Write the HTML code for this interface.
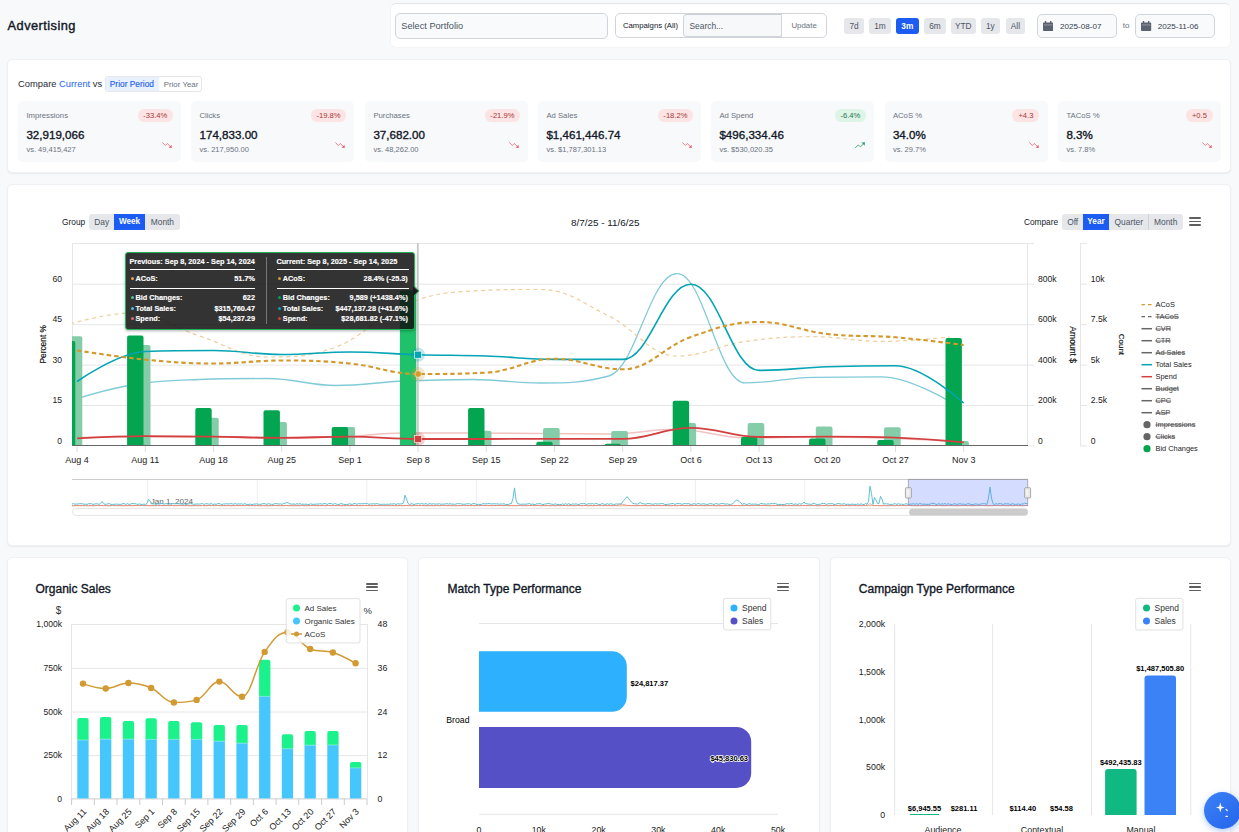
<!DOCTYPE html>
<html><head><meta charset="utf-8">
<style>
*{box-sizing:border-box;margin:0;padding:0}
html,body{width:1239px;height:832px;overflow:hidden;background:#f8f9fb;font-family:"Liberation Sans",sans-serif;color:#111827}
.a{position:absolute}
.t{line-height:1;white-space:nowrap}
</style></head><body>
<div class="a t" style="left:7.6px;top:19.56px;font-size:12.80px;color:#111827;font-weight:normal;-webkit-text-stroke:0.4px #111827;letter-spacing:0.45px">Advertising</div>
<div class="a" style="left:390.0px;top:3.2px;width:840.8px;height:44.4px;background:#fff;border:1px solid #f3f4f6;border-top:1px solid #e3e5e9;border-radius:6px"></div>
<div class="a" style="left:395.0px;top:13.0px;width:212.5px;height:26.0px;background:#f9fafb;border:1px solid #d1d5db;border-radius:5px"></div>
<div class="a t" style="left:401.3px;top:21.51px;font-size:9.20px;color:#4b5563;font-weight:normal;">Select Portfolio</div>
<div class="a" style="left:614.5px;top:13.1px;width:212.1px;height:25.4px;background:#fff;border:1px solid #d1d5db;border-radius:5px"></div>
<div class="a t" style="left:622.9px;top:22.24px;font-size:7.75px;color:#111827;font-weight:normal;">Campaigns (All)</div>
<div class="a" style="left:683.3px;top:14.3px;width:98.7px;height:22.9px;background:#f7f8fa;border:1px solid #d1d5db;border-top:1.5px solid #c9ced6;border-radius:4px 0 0 4px"></div>
<div class="a t" style="left:689.5px;top:22.19px;font-size:8.40px;color:#4b5563;font-weight:normal;">Search...</div>
<div class="a t" style="left:791.4px;top:22.31px;font-size:7.90px;color:#6b7280;font-weight:normal;">Update</div>
<div class="a" style="left:844.2px;top:18.1px;width:19.5px;height:15.6px;background:#e5e7eb;border-radius:3px"></div>
<div class="a t" style="left:854.0px;width:0;top:22.17px;font-size:8.30px;color:#4b5563;font-weight:normal;"><span style="position:absolute;left:0;transform:translateX(-50%)">7d</span></div>
<div class="a" style="left:869.2px;top:18.1px;width:21.5px;height:15.6px;background:#e5e7eb;border-radius:3px"></div>
<div class="a t" style="left:880.0px;width:0;top:22.17px;font-size:8.30px;color:#4b5563;font-weight:normal;"><span style="position:absolute;left:0;transform:translateX(-50%)">1m</span></div>
<div class="a" style="left:896.0px;top:18.1px;width:22.6px;height:15.6px;background:#1d5cf2;border-radius:3px"></div>
<div class="a t" style="left:907.3px;width:0;top:22.17px;font-size:8.30px;color:#fff;font-weight:bold;"><span style="position:absolute;left:0;transform:translateX(-50%)">3m</span></div>
<div class="a" style="left:924.1px;top:18.1px;width:21.6px;height:15.6px;background:#e5e7eb;border-radius:3px"></div>
<div class="a t" style="left:934.9px;width:0;top:22.17px;font-size:8.30px;color:#4b5563;font-weight:normal;"><span style="position:absolute;left:0;transform:translateX(-50%)">6m</span></div>
<div class="a" style="left:950.9px;top:18.1px;width:24.9px;height:15.6px;background:#e5e7eb;border-radius:3px"></div>
<div class="a t" style="left:963.3px;width:0;top:22.17px;font-size:8.30px;color:#4b5563;font-weight:normal;"><span style="position:absolute;left:0;transform:translateX(-50%)">YTD</span></div>
<div class="a" style="left:981.1px;top:18.1px;width:18.5px;height:15.6px;background:#e5e7eb;border-radius:3px"></div>
<div class="a t" style="left:990.4px;width:0;top:22.17px;font-size:8.30px;color:#4b5563;font-weight:normal;"><span style="position:absolute;left:0;transform:translateX(-50%)">1y</span></div>
<div class="a" style="left:1006.1px;top:18.1px;width:18.6px;height:15.6px;background:#e5e7eb;border-radius:3px"></div>
<div class="a t" style="left:1015.4px;width:0;top:22.17px;font-size:8.30px;color:#4b5563;font-weight:normal;"><span style="position:absolute;left:0;transform:translateX(-50%)">All</span></div>
<div class="a" style="left:1037.1px;top:14.3px;width:79.8px;height:23.5px;background:#f9fafb;border:1px solid #d1d5db;border-radius:5px"></div>
<svg class="a" style="left:1043.1px;top:21px" width="10.2" height="10" viewBox="0 0 10.2 10"><rect x="0" y="1.6" width="10.2" height="8.4" rx="0.8" fill="#5b6270"/><rect x="1.8" y="0" width="1.4" height="2.6" fill="#5b6270"/><rect x="7" y="0" width="1.4" height="2.6" fill="#5b6270"/><rect x="0.8" y="3.6" width="8.6" height="0.7" fill="#fff" opacity="0.5"/></svg>
<div class="a t" style="left:1060.0px;top:22.74px;font-size:8.10px;color:#374151;font-weight:normal;">2025-08-07</div>
<div class="a" style="left:1135.4px;top:14.3px;width:79.3px;height:23.5px;background:#f9fafb;border:1px solid #d1d5db;border-radius:5px"></div>
<svg class="a" style="left:1141.4px;top:21px" width="10.2" height="10" viewBox="0 0 10.2 10"><rect x="0" y="1.6" width="10.2" height="8.4" rx="0.8" fill="#5b6270"/><rect x="1.8" y="0" width="1.4" height="2.6" fill="#5b6270"/><rect x="7" y="0" width="1.4" height="2.6" fill="#5b6270"/><rect x="0.8" y="3.6" width="8.6" height="0.7" fill="#fff" opacity="0.5"/></svg>
<div class="a t" style="left:1157.7px;top:22.74px;font-size:8.10px;color:#374151;font-weight:normal;">2025-11-06</div>
<div class="a t" style="left:1122.8px;top:22.33px;font-size:8.00px;color:#6b7280;font-weight:normal;">to</div>
<div class="a" style="left:6.7px;top:58.7px;width:1224.6px;height:114.3px;background:#fff;border:1px solid #eef0f3;border-radius:5px;box-shadow:0 1px 1.5px rgba(16,24,40,0.07)"></div>
<div class="a t" style="left:18.1px;top:79.70px;font-size:9.33px;color:#1f2937;font-weight:normal;">Compare <span style="color:#2563eb">Current</span> vs</div>
<div class="a" style="left:105.2px;top:76.2px;width:97.2px;height:15.4px;background:#fff;border:1px solid #e5e7eb;border-radius:3px"></div>
<div class="a" style="left:105.7px;top:76.7px;width:53.6px;height:14.4px;background:#e8f1fd;border-radius:3px 0 0 3px"></div>
<div class="a t" style="left:109.8px;top:80.31px;font-size:8.37px;color:#2563eb;font-weight:normal;-webkit-text-stroke:0.15px #2563eb">Prior Period</div>
<div class="a t" style="left:163.7px;top:80.71px;font-size:7.90px;color:#6b7280;font-weight:normal;">Prior Year</div>
<div class="a" style="left:18.0px;top:101.0px;width:163.0px;height:61.0px;background:#f8f9fb;border-radius:5px"></div>
<div class="a t" style="left:26.4px;top:111.67px;font-size:7.72px;color:#6b7280;font-weight:normal;">Impressions</div>
<div class="a" style="left:137.7px;top:109.0px;width:35.3px;height:12.6px;background:#fde4e4;border-radius:6.3px"></div>
<div class="a t" style="left:155.3px;width:0;top:111.67px;font-size:7.60px;color:#a83636;font-weight:normal;"><span style="position:absolute;left:0;transform:translateX(-50%)">-33.4%</span></div>
<div class="a t" style="left:26.4px;top:129.08px;font-size:11.60px;color:#111827;font-weight:normal;-webkit-text-stroke:0.35px #111827">32,919,066</div>
<div class="a t" style="left:26.4px;top:145.73px;font-size:7.53px;color:#6b7280;font-weight:normal;">vs. 49,415,427</div>
<svg class="a" style="left:162.0px;top:142px" width="10" height="6.5" viewBox="0 0 10 6.5"><path d="M0.3 0.4 L3.3 3.5 L5.3 1.5 L8.4 4.5" fill="none" stroke="#e8636b" stroke-width="0.8"/><path d="M9.8 6.1 L6.6 5.8 L9.5 2.8 Z" fill="#e8636b"/></svg>
<div class="a" style="left:191.1px;top:101.0px;width:163.0px;height:61.0px;background:#f8f9fb;border-radius:5px"></div>
<div class="a t" style="left:199.5px;top:111.67px;font-size:7.72px;color:#6b7280;font-weight:normal;">Clicks</div>
<div class="a" style="left:310.8px;top:109.0px;width:35.3px;height:12.6px;background:#fde4e4;border-radius:6.3px"></div>
<div class="a t" style="left:328.5px;width:0;top:111.67px;font-size:7.60px;color:#a83636;font-weight:normal;"><span style="position:absolute;left:0;transform:translateX(-50%)">-19.8%</span></div>
<div class="a t" style="left:199.5px;top:129.08px;font-size:11.60px;color:#111827;font-weight:normal;-webkit-text-stroke:0.35px #111827">174,833.00</div>
<div class="a t" style="left:199.5px;top:145.73px;font-size:7.53px;color:#6b7280;font-weight:normal;">vs. 217,950.00</div>
<svg class="a" style="left:335.1px;top:142px" width="10" height="6.5" viewBox="0 0 10 6.5"><path d="M0.3 0.4 L3.3 3.5 L5.3 1.5 L8.4 4.5" fill="none" stroke="#e8636b" stroke-width="0.8"/><path d="M9.8 6.1 L6.6 5.8 L9.5 2.8 Z" fill="#e8636b"/></svg>
<div class="a" style="left:365.0px;top:101.0px;width:163.0px;height:61.0px;background:#f8f9fb;border-radius:5px"></div>
<div class="a t" style="left:373.4px;top:111.67px;font-size:7.72px;color:#6b7280;font-weight:normal;">Purchases</div>
<div class="a" style="left:484.7px;top:109.0px;width:35.3px;height:12.6px;background:#fde4e4;border-radius:6.3px"></div>
<div class="a t" style="left:502.4px;width:0;top:111.67px;font-size:7.60px;color:#a83636;font-weight:normal;"><span style="position:absolute;left:0;transform:translateX(-50%)">-21.9%</span></div>
<div class="a t" style="left:373.4px;top:129.08px;font-size:11.60px;color:#111827;font-weight:normal;-webkit-text-stroke:0.35px #111827">37,682.00</div>
<div class="a t" style="left:373.4px;top:145.73px;font-size:7.53px;color:#6b7280;font-weight:normal;">vs. 48,262.00</div>
<svg class="a" style="left:509.0px;top:142px" width="10" height="6.5" viewBox="0 0 10 6.5"><path d="M0.3 0.4 L3.3 3.5 L5.3 1.5 L8.4 4.5" fill="none" stroke="#e8636b" stroke-width="0.8"/><path d="M9.8 6.1 L6.6 5.8 L9.5 2.8 Z" fill="#e8636b"/></svg>
<div class="a" style="left:538.0px;top:101.0px;width:163.0px;height:61.0px;background:#f8f9fb;border-radius:5px"></div>
<div class="a t" style="left:546.4px;top:111.67px;font-size:7.72px;color:#6b7280;font-weight:normal;">Ad Sales</div>
<div class="a" style="left:657.7px;top:109.0px;width:35.3px;height:12.6px;background:#fde4e4;border-radius:6.3px"></div>
<div class="a t" style="left:675.4px;width:0;top:111.67px;font-size:7.60px;color:#a83636;font-weight:normal;"><span style="position:absolute;left:0;transform:translateX(-50%)">-18.2%</span></div>
<div class="a t" style="left:546.4px;top:129.08px;font-size:11.60px;color:#111827;font-weight:normal;-webkit-text-stroke:0.35px #111827">$1,461,446.74</div>
<div class="a t" style="left:546.4px;top:145.73px;font-size:7.53px;color:#6b7280;font-weight:normal;">vs. $1,787,301.13</div>
<svg class="a" style="left:682.0px;top:142px" width="10" height="6.5" viewBox="0 0 10 6.5"><path d="M0.3 0.4 L3.3 3.5 L5.3 1.5 L8.4 4.5" fill="none" stroke="#e8636b" stroke-width="0.8"/><path d="M9.8 6.1 L6.6 5.8 L9.5 2.8 Z" fill="#e8636b"/></svg>
<div class="a" style="left:711.0px;top:101.0px;width:163.0px;height:61.0px;background:#f8f9fb;border-radius:5px"></div>
<div class="a t" style="left:719.4px;top:111.67px;font-size:7.72px;color:#6b7280;font-weight:normal;">Ad Spend</div>
<div class="a" style="left:834.8px;top:109.0px;width:31.2px;height:12.6px;background:#dcf5e6;border-radius:6.3px"></div>
<div class="a t" style="left:850.4px;width:0;top:111.67px;font-size:7.60px;color:#2a7350;font-weight:normal;"><span style="position:absolute;left:0;transform:translateX(-50%)">-6.4%</span></div>
<div class="a t" style="left:719.4px;top:129.08px;font-size:11.60px;color:#111827;font-weight:normal;-webkit-text-stroke:0.35px #111827">$496,334.46</div>
<div class="a t" style="left:719.4px;top:145.73px;font-size:7.53px;color:#6b7280;font-weight:normal;">vs. $530,020.35</div>
<svg class="a" style="left:855.0px;top:142px" width="10" height="6.5" viewBox="0 0 10 6.5"><path d="M0.3 5.9 L3.3 2.9 L5.3 4.9 L8.4 1.9" fill="none" stroke="#34a070" stroke-width="0.9"/><path d="M10 0.2 L6.4 0.5 L9.7 3.8 Z" fill="#34a070"/></svg>
<div class="a" style="left:884.5px;top:101.0px;width:163.0px;height:61.0px;background:#f8f9fb;border-radius:5px"></div>
<div class="a t" style="left:892.9px;top:111.67px;font-size:7.72px;color:#6b7280;font-weight:normal;">ACoS %</div>
<div class="a" style="left:1012.3px;top:109.0px;width:27.2px;height:12.6px;background:#fde4e4;border-radius:6.3px"></div>
<div class="a t" style="left:1025.9px;width:0;top:111.67px;font-size:7.60px;color:#a83636;font-weight:normal;"><span style="position:absolute;left:0;transform:translateX(-50%)">+4.3</span></div>
<div class="a t" style="left:892.9px;top:129.08px;font-size:11.60px;color:#111827;font-weight:normal;-webkit-text-stroke:0.35px #111827">34.0%</div>
<div class="a t" style="left:892.9px;top:145.73px;font-size:7.53px;color:#6b7280;font-weight:normal;">vs. 29.7%</div>
<svg class="a" style="left:1028.5px;top:142px" width="10" height="6.5" viewBox="0 0 10 6.5"><path d="M0.3 0.4 L3.3 3.5 L5.3 1.5 L8.4 4.5" fill="none" stroke="#e8636b" stroke-width="0.8"/><path d="M9.8 6.1 L6.6 5.8 L9.5 2.8 Z" fill="#e8636b"/></svg>
<div class="a" style="left:1058.0px;top:101.0px;width:163.0px;height:61.0px;background:#f8f9fb;border-radius:5px"></div>
<div class="a t" style="left:1066.4px;top:111.67px;font-size:7.72px;color:#6b7280;font-weight:normal;">TACoS %</div>
<div class="a" style="left:1185.8px;top:109.0px;width:27.2px;height:12.6px;background:#fde4e4;border-radius:6.3px"></div>
<div class="a t" style="left:1199.4px;width:0;top:111.67px;font-size:7.60px;color:#a83636;font-weight:normal;"><span style="position:absolute;left:0;transform:translateX(-50%)">+0.5</span></div>
<div class="a t" style="left:1066.4px;top:129.08px;font-size:11.60px;color:#111827;font-weight:normal;-webkit-text-stroke:0.35px #111827">8.3%</div>
<div class="a t" style="left:1066.4px;top:145.73px;font-size:7.53px;color:#6b7280;font-weight:normal;">vs. 7.8%</div>
<svg class="a" style="left:1202.0px;top:142px" width="10" height="6.5" viewBox="0 0 10 6.5"><path d="M0.3 0.4 L3.3 3.5 L5.3 1.5 L8.4 4.5" fill="none" stroke="#e8636b" stroke-width="0.8"/><path d="M9.8 6.1 L6.6 5.8 L9.5 2.8 Z" fill="#e8636b"/></svg>
<div class="a" style="left:6.7px;top:183.6px;width:1224.6px;height:362.7px;background:#fff;border:1px solid #eef0f3;border-radius:5px;box-shadow:0 1px 1.5px rgba(16,24,40,0.07)"></div>
<div class="a t" style="left:62.1px;top:217.57px;font-size:8.30px;color:#111827;font-weight:normal;">Group</div>
<div class="a" style="left:89.2px;top:214.2px;width:90.8px;height:15.5px;background:#e5e7eb;border-radius:3px"></div>
<div class="a" style="left:114.1px;top:214.2px;width:30.8px;height:15.5px;background:#1d5cf2"></div>
<div class="a t" style="left:101.7px;width:0;top:217.59px;font-size:8.40px;color:#4b5563;font-weight:normal;"><span style="position:absolute;left:0;transform:translateX(-50%)">Day</span></div>
<div class="a t" style="left:129.5px;width:0;top:217.76px;font-size:8.20px;color:#fff;font-weight:bold;"><span style="position:absolute;left:0;transform:translateX(-50%)">Week</span></div>
<div class="a t" style="left:162.4px;width:0;top:217.59px;font-size:8.40px;color:#4b5563;font-weight:normal;"><span style="position:absolute;left:0;transform:translateX(-50%)">Month</span></div>
<div class="a t" style="left:605.3px;width:0;top:217.52px;font-size:9.90px;color:#111827;font-weight:normal;"><span style="position:absolute;left:0;transform:translateX(-50%)">8/7/25 - 11/6/25</span></div>
<div class="a t" style="left:1023.9px;top:217.57px;font-size:8.30px;color:#111827;font-weight:normal;">Compare</div>
<div class="a" style="left:1062.3px;top:213.9px;width:120.5px;height:15.7px;background:#e5e7eb;border-radius:3px"></div>
<div class="a" style="left:1083.0px;top:213.9px;width:25.9px;height:15.7px;background:#1d5cf2"></div>
<div class="a" style="left:1148.3px;top:213.9px;width:0.6px;height:15.7px;background:#cfd2d8"></div>
<div class="a t" style="left:1072.7px;width:0;top:217.59px;font-size:8.40px;color:#4b5563;font-weight:normal;"><span style="position:absolute;left:0;transform:translateX(-50%)">Off</span></div>
<div class="a t" style="left:1096.0px;width:0;top:217.76px;font-size:8.20px;color:#fff;font-weight:bold;"><span style="position:absolute;left:0;transform:translateX(-50%)">Year</span></div>
<div class="a t" style="left:1128.8px;width:0;top:217.59px;font-size:8.40px;color:#4b5563;font-weight:normal;"><span style="position:absolute;left:0;transform:translateX(-50%)">Quarter</span></div>
<div class="a t" style="left:1165.7px;width:0;top:217.59px;font-size:8.40px;color:#4b5563;font-weight:normal;"><span style="position:absolute;left:0;transform:translateX(-50%)">Month</span></div>
<div class="a" style="left:1189.3px;top:217.2px;width:11.5px;height:1.7px;background:#5f5f5f;border-radius:1px"></div>
<div class="a" style="left:1189.3px;top:220.6px;width:11.5px;height:1.7px;background:#5f5f5f;border-radius:1px"></div>
<div class="a" style="left:1189.3px;top:224.0px;width:11.5px;height:1.7px;background:#5f5f5f;border-radius:1px"></div>
<div class="a" style="left:6.7px;top:557.0px;width:401.8px;height:313.0px;background:#fff;border:1px solid #eef0f3;border-radius:5px;box-shadow:0 1px 1.5px rgba(16,24,40,0.07)"></div>
<div class="a" style="left:418.4px;top:557.0px;width:402.1px;height:313.0px;background:#fff;border:1px solid #eef0f3;border-radius:5px;box-shadow:0 1px 1.5px rgba(16,24,40,0.07)"></div>
<div class="a" style="left:830.0px;top:557.0px;width:401.3px;height:313.0px;background:#fff;border:1px solid #eef0f3;border-radius:5px;box-shadow:0 1px 1.5px rgba(16,24,40,0.07)"></div>
<div class="a t" style="left:35.5px;top:583.04px;font-size:12.00px;color:#111827;font-weight:normal;-webkit-text-stroke:0.35px currentColor;">Organic Sales</div>
<div class="a t" style="left:447.5px;top:583.04px;font-size:12.00px;color:#111827;font-weight:normal;-webkit-text-stroke:0.35px currentColor;">Match Type Performance</div>
<div class="a t" style="left:858.8px;top:583.14px;font-size:12.00px;color:#111827;font-weight:normal;-webkit-text-stroke:0.35px currentColor;">Campaign Type Performance</div>
<div class="a" style="left:366.0px;top:583.0px;width:11.5px;height:1.7px;background:#5f5f5f;border-radius:1px"></div>
<div class="a" style="left:366.0px;top:586.4px;width:11.5px;height:1.7px;background:#5f5f5f;border-radius:1px"></div>
<div class="a" style="left:366.0px;top:589.8px;width:11.5px;height:1.7px;background:#5f5f5f;border-radius:1px"></div>
<div class="a" style="left:777.0px;top:582.8px;width:11.5px;height:1.7px;background:#5f5f5f;border-radius:1px"></div>
<div class="a" style="left:777.0px;top:586.2px;width:11.5px;height:1.7px;background:#5f5f5f;border-radius:1px"></div>
<div class="a" style="left:777.0px;top:589.6px;width:11.5px;height:1.7px;background:#5f5f5f;border-radius:1px"></div>
<div class="a" style="left:1189.2px;top:582.8px;width:11.5px;height:1.7px;background:#5f5f5f;border-radius:1px"></div>
<div class="a" style="left:1189.2px;top:586.2px;width:11.5px;height:1.7px;background:#5f5f5f;border-radius:1px"></div>
<div class="a" style="left:1189.2px;top:589.6px;width:11.5px;height:1.7px;background:#5f5f5f;border-radius:1px"></div>
<svg class="a" style="left:0;top:0" width="1239" height="832" viewBox="0 0 1239 832" font-family="Liberation Sans, sans-serif">
<line x1="72" y1="243.5" x2="1028" y2="243.5" stroke="#e6e6e6" stroke-width="1"/>
<line x1="72" y1="284.2" x2="1028" y2="284.2" stroke="#e6e6e6" stroke-width="1"/>
<line x1="72" y1="324.7" x2="1028" y2="324.7" stroke="#e6e6e6" stroke-width="1"/>
<line x1="72" y1="365.1" x2="1028" y2="365.1" stroke="#e6e6e6" stroke-width="1"/>
<line x1="72" y1="405.5" x2="1028" y2="405.5" stroke="#e6e6e6" stroke-width="1"/>
<line x1="1028" y1="243.5" x2="1034" y2="243.5" stroke="#e6e6e6"/>
<line x1="1028" y1="284.2" x2="1034" y2="284.2" stroke="#e6e6e6"/>
<line x1="1028" y1="324.7" x2="1034" y2="324.7" stroke="#e6e6e6"/>
<line x1="1028" y1="365.1" x2="1034" y2="365.1" stroke="#e6e6e6"/>
<line x1="1028" y1="405.5" x2="1034" y2="405.5" stroke="#e6e6e6"/>
<line x1="1028" y1="445.9" x2="1034" y2="445.9" stroke="#e6e6e6"/>
<line x1="1080.5" y1="243" x2="1080.5" y2="446" stroke="#e6e6e6"/>
<line x1="1027.5" y1="243" x2="1027.5" y2="446" stroke="#e6e6e6"/>
<line x1="1080" y1="243.5" x2="1087" y2="243.5" stroke="#e6e6e6"/>
<line x1="1080" y1="284.2" x2="1087" y2="284.2" stroke="#e6e6e6"/>
<line x1="1080" y1="324.7" x2="1087" y2="324.7" stroke="#e6e6e6"/>
<line x1="1080" y1="365.1" x2="1087" y2="365.1" stroke="#e6e6e6"/>
<line x1="1080" y1="405.5" x2="1087" y2="405.5" stroke="#e6e6e6"/>
<line x1="1080" y1="445.9" x2="1087" y2="445.9" stroke="#e6e6e6"/>
<line x1="72.5" y1="243" x2="72.5" y2="445" stroke="#e6e6e6"/>
<defs><clipPath id="pc"><rect x="72" y="243" width="956" height="203"/></clipPath></defs>
<g clip-path="url(#pc)">
<path d="M63.2 437.5 C63.2 437.5 104.1 437.0 131.4 437.0 C158.7 437.0 172.3 437.0 199.6 437.0 C226.9 437.0 240.5 437.5 267.8 437.5 C295.1 437.5 308.7 437.5 336.0 437.0 C363.3 436.5 376.9 433.0 404.2 433.0 C431.5 433.0 445.1 433.0 472.4 433.0 C499.7 433.0 513.3 433.3 540.6 433.5 C567.9 433.7 581.5 434.0 608.8 434.0 C636.1 434.0 649.7 429.3 677.0 429.3 C704.3 429.3 717.9 437.8 745.2 437.8 C772.5 437.8 786.1 437.0 813.4 437.0 C840.7 437.0 854.3 437.2 881.6 438.0 C908.9 438.8 949.8 441.0 949.8 441.0" fill="none" stroke="#f2c1c1" stroke-width="1.5"/>
<path d="M63.2 403.0 C63.2 403.0 104.1 389.7 131.4 385.0 C158.7 380.3 172.3 380.5 199.6 379.5 C226.9 378.5 240.5 378.5 267.8 378.5 C295.1 378.5 308.7 385.5 336.0 385.5 C363.3 385.5 376.9 382.2 404.2 381.0 C431.5 379.8 445.1 379.5 472.4 379.5 C499.7 379.5 513.3 383.0 540.6 383.0 C567.9 383.0 581.5 383.0 608.8 376.0 C636.1 369.0 649.7 273.7 677.0 273.7 C704.3 273.7 717.9 382.9 745.2 382.9 C772.5 382.9 786.1 377.8 813.4 377.3 C840.7 376.8 854.3 376.8 881.6 376.8 C908.9 376.8 949.8 401.6 949.8 401.6" fill="none" stroke="#80cbd8" stroke-width="1.3"/>
<path d="M63.2 326.0 C63.2 326.0 104.1 313.0 131.4 313.0 C158.7 313.0 172.3 327.2 199.6 336.0 C226.9 344.8 240.5 357.0 267.8 357.0 C295.1 357.0 308.7 357.0 336.0 347.0 C363.3 337.0 376.9 316.2 404.2 305.0 C431.5 293.8 445.1 292.5 472.4 291.0 C499.7 289.5 513.3 289.5 540.6 289.5 C567.9 289.5 581.5 302.7 608.8 316.0 C636.1 329.3 649.7 356.0 677.0 356.0 C704.3 356.0 717.9 345.4 745.2 341.5 C772.5 337.6 786.1 336.7 813.4 336.7 C840.7 336.7 854.3 341.4 881.6 341.4 C908.9 341.4 949.8 337.0 949.8 337.0" fill="none" stroke="#efcd9c" stroke-width="1.2" stroke-dasharray="4 3.5"/>
<path d="M65.6 445.4 V338.2 a2 2 0 0 1 2 -2 H80.3 a2 2 0 0 1 2 2 V445.4 Z" fill="#85cda9"/>
<path d="M58.9 445.4 V342.9 a2 2 0 0 1 2 -2 H73.3 a2 2 0 0 1 2 2 V445.4 Z" fill="#03a550"/>
<path d="M133.8 445.4 V347.0 a2 2 0 0 1 2 -2 H148.5 a2 2 0 0 1 2 2 V445.4 Z" fill="#85cda9"/>
<path d="M127.1 445.4 V337.6 a2 2 0 0 1 2 -2 H141.5 a2 2 0 0 1 2 2 V445.4 Z" fill="#03a550"/>
<path d="M202.0 445.4 V419.7 a2 2 0 0 1 2 -2 H216.7 a2 2 0 0 1 2 2 V445.4 Z" fill="#85cda9"/>
<path d="M195.3 445.4 V410.0 a2 2 0 0 1 2 -2 H209.7 a2 2 0 0 1 2 2 V445.4 Z" fill="#03a550"/>
<path d="M270.2 445.4 V424.0 a2 2 0 0 1 2 -2 H284.9 a2 2 0 0 1 2 2 V445.4 Z" fill="#85cda9"/>
<path d="M263.5 445.4 V412.2 a2 2 0 0 1 2 -2 H277.9 a2 2 0 0 1 2 2 V445.4 Z" fill="#03a550"/>
<path d="M338.4 445.4 V429.0 a2 2 0 0 1 2 -2 H353.1 a2 2 0 0 1 2 2 V445.4 Z" fill="#85cda9"/>
<path d="M331.7 445.4 V429.0 a2 2 0 0 1 2 -2 H346.1 a2 2 0 0 1 2 2 V445.4 Z" fill="#03a550"/>
<path d="M399.9 445.4 V292.3 a2 2 0 0 1 2 -2 H414.3 a2 2 0 0 1 2 2 V445.4 Z" fill="#1fc16b"/>
<path d="M474.8 445.4 V432.7 a2 2 0 0 1 2 -2 H489.5 a2 2 0 0 1 2 2 V445.4 Z" fill="#85cda9"/>
<path d="M468.1 445.4 V410.0 a2 2 0 0 1 2 -2 H482.5 a2 2 0 0 1 2 2 V445.4 Z" fill="#03a550"/>
<path d="M543.0 445.4 V429.9 a2 2 0 0 1 2 -2 H557.7 a2 2 0 0 1 2 2 V445.4 Z" fill="#85cda9"/>
<path d="M536.3 445.4 V443.7 a2 2 0 0 1 2 -2 H550.7 a2 2 0 0 1 2 2 V445.4 Z" fill="#03a550"/>
<path d="M611.2 445.4 V433.1 a2 2 0 0 1 2 -2 H625.9 a2 2 0 0 1 2 2 V445.4 Z" fill="#85cda9"/>
<path d="M604.5 445.4 V445.7 a2 2 0 0 1 2 -2 H618.9 a2 2 0 0 1 2 2 V445.4 Z" fill="#03a550"/>
<path d="M679.4 445.4 V425.0 a2 2 0 0 1 2 -2 H694.1 a2 2 0 0 1 2 2 V445.4 Z" fill="#85cda9"/>
<path d="M672.7 445.4 V402.8 a2 2 0 0 1 2 -2 H687.1 a2 2 0 0 1 2 2 V445.4 Z" fill="#03a550"/>
<path d="M747.6 445.4 V425.0 a2 2 0 0 1 2 -2 H762.3 a2 2 0 0 1 2 2 V445.4 Z" fill="#85cda9"/>
<path d="M740.9 445.4 V439.0 a2 2 0 0 1 2 -2 H755.3 a2 2 0 0 1 2 2 V445.4 Z" fill="#03a550"/>
<path d="M815.8 445.4 V428.5 a2 2 0 0 1 2 -2 H830.5 a2 2 0 0 1 2 2 V445.4 Z" fill="#85cda9"/>
<path d="M809.1 445.4 V440.4 a2 2 0 0 1 2 -2 H823.5 a2 2 0 0 1 2 2 V445.4 Z" fill="#03a550"/>
<path d="M884.0 445.4 V429.3 a2 2 0 0 1 2 -2 H898.7 a2 2 0 0 1 2 2 V445.4 Z" fill="#85cda9"/>
<path d="M877.3 445.4 V442.0 a2 2 0 0 1 2 -2 H891.7 a2 2 0 0 1 2 2 V445.4 Z" fill="#03a550"/>
<path d="M952.2 445.4 V443.0 a2 2 0 0 1 2 -2 H966.9 a2 2 0 0 1 2 2 V445.4 Z" fill="#85cda9"/>
<path d="M945.5 445.4 V340.0 a2 2 0 0 1 2 -2 H959.9 a2 2 0 0 1 2 2 V445.4 Z" fill="#03a550"/>
<path d="M77.1 438.4 C77.1 438.4 118.0 436.2 145.3 436.2 C172.6 436.2 186.2 436.4 213.5 436.7 C240.8 437.0 254.4 437.8 281.7 437.8 C309.0 437.8 322.6 436.7 349.9 436.7 C377.2 436.7 390.8 439.0 418.1 439.0 C445.4 439.0 459.0 439.0 486.3 439.0 C513.6 439.0 527.2 438.8 554.5 438.8 C581.8 438.8 595.4 438.9 622.7 438.9 C650.0 438.9 663.6 427.9 690.9 427.9 C718.2 427.9 731.8 437.0 759.1 437.0 C786.4 437.0 800.0 436.7 827.3 436.7 C854.6 436.7 868.2 436.7 895.5 437.6 C922.8 438.5 963.7 442.3 963.7 442.3" fill="none" stroke="#d33f3f" stroke-width="1.8"/>
<path d="M77.1 381.5 C77.1 381.5 118.0 352.5 145.3 351.5 C172.6 350.5 186.2 350.5 213.5 350.5 C240.8 350.5 254.4 354.5 281.7 354.5 C309.0 354.5 322.6 352.0 349.9 352.0 C377.2 352.0 390.8 353.9 418.1 354.7 C445.4 355.5 459.0 355.1 486.3 356.0 C513.6 356.9 527.2 359.4 554.5 359.4 C581.8 359.4 595.4 359.4 622.7 359.4 C650.0 359.4 663.6 284.2 690.9 284.2 C718.2 284.2 731.8 370.4 759.1 370.4 C786.4 370.4 800.0 367.7 827.3 366.8 C854.6 365.9 868.2 365.7 895.5 365.7 C922.8 365.7 963.7 403.0 963.7 403.0" fill="none" stroke="#03a4b4" stroke-width="1.6"/>
<path d="M77.1 350.5 C77.1 350.5 118.0 357.0 145.3 359.6 C172.6 362.2 186.2 363.5 213.5 363.5 C240.8 363.5 254.4 360.5 281.7 360.5 C309.0 360.5 322.6 360.8 349.9 363.5 C377.2 366.2 390.8 374.0 418.1 374.0 C445.4 374.0 459.0 374.0 486.3 372.6 C513.6 371.2 527.2 358.8 554.5 358.8 C581.8 358.8 595.4 369.3 622.7 369.3 C650.0 369.3 663.6 346.5 690.9 337.0 C718.2 327.5 731.8 322.0 759.1 322.0 C786.4 322.0 800.0 330.9 827.3 334.0 C854.6 337.1 868.2 335.1 895.5 337.3 C922.8 339.5 963.7 345.0 963.7 345.0" fill="none" stroke="#d4992c" stroke-width="2.1" stroke-dasharray="4.5 3"/>
</g>
<line x1="417.8" y1="243" x2="417.8" y2="445" stroke="#c8c8c8" stroke-width="1.8"/>
<line x1="72" y1="445.5" x2="1028" y2="445.5" stroke="#666" stroke-width="1.2"/>
<line x1="77.1" y1="446" x2="77.1" y2="452" stroke="#ddd"/>
<line x1="145.3" y1="446" x2="145.3" y2="452" stroke="#ddd"/>
<line x1="213.5" y1="446" x2="213.5" y2="452" stroke="#ddd"/>
<line x1="281.7" y1="446" x2="281.7" y2="452" stroke="#ddd"/>
<line x1="349.9" y1="446" x2="349.9" y2="452" stroke="#ddd"/>
<line x1="418.1" y1="446" x2="418.1" y2="452" stroke="#ddd"/>
<line x1="486.3" y1="446" x2="486.3" y2="452" stroke="#ddd"/>
<line x1="554.5" y1="446" x2="554.5" y2="452" stroke="#ddd"/>
<line x1="622.7" y1="446" x2="622.7" y2="452" stroke="#ddd"/>
<line x1="690.9" y1="446" x2="690.9" y2="452" stroke="#ddd"/>
<line x1="759.1" y1="446" x2="759.1" y2="452" stroke="#ddd"/>
<line x1="827.3" y1="446" x2="827.3" y2="452" stroke="#ddd"/>
<line x1="895.5" y1="446" x2="895.5" y2="452" stroke="#ddd"/>
<line x1="963.7" y1="446" x2="963.7" y2="452" stroke="#ddd"/>
<circle cx="418.1" cy="354.7" r="7" fill="#03a4b4" fill-opacity="0.25"/>
<rect x="414.6" y="351.2" width="7" height="7" fill="#03a4b4" stroke="#fff" stroke-width="0.6"/>
<circle cx="418.1" cy="374" r="7" fill="#d59b2d" fill-opacity="0.25"/>
<circle cx="418.1" cy="374" r="3.3" fill="#d59b2d" stroke="#fff" stroke-width="0.5"/>
<circle cx="418.1" cy="439" r="7" fill="#d33f3f" fill-opacity="0.25"/>
<rect x="414.6" y="435.5" width="7" height="7" fill="#d33f3f" stroke="#fff" stroke-width="0.6"/>
<text x="77.1" y="462.9" text-anchor="middle" font-size="9" fill="#222">Aug 4</text>
<text x="145.3" y="462.9" text-anchor="middle" font-size="9" fill="#222">Aug 11</text>
<text x="213.5" y="462.9" text-anchor="middle" font-size="9" fill="#222">Aug 18</text>
<text x="281.7" y="462.9" text-anchor="middle" font-size="9" fill="#222">Aug 25</text>
<text x="349.9" y="462.9" text-anchor="middle" font-size="9" fill="#222">Sep 1</text>
<text x="418.1" y="462.9" text-anchor="middle" font-size="9" fill="#222">Sep 8</text>
<text x="486.3" y="462.9" text-anchor="middle" font-size="9" fill="#222">Sep 15</text>
<text x="554.5" y="462.9" text-anchor="middle" font-size="9" fill="#222">Sep 22</text>
<text x="622.7" y="462.9" text-anchor="middle" font-size="9" fill="#222">Sep 29</text>
<text x="690.9" y="462.9" text-anchor="middle" font-size="9" fill="#222">Oct 6</text>
<text x="759.1" y="462.9" text-anchor="middle" font-size="9" fill="#222">Oct 13</text>
<text x="827.3" y="462.9" text-anchor="middle" font-size="9" fill="#222">Oct 20</text>
<text x="895.5" y="462.9" text-anchor="middle" font-size="9" fill="#222">Oct 27</text>
<text x="963.7" y="462.9" text-anchor="middle" font-size="9" fill="#222">Nov 3</text>
<text x="62.1" y="281.9" text-anchor="end" font-size="8.6" fill="#222">60</text>
<text x="62.1" y="322.4" text-anchor="end" font-size="8.6" fill="#222">45</text>
<text x="62.1" y="362.8" text-anchor="end" font-size="8.6" fill="#222">30</text>
<text x="62.1" y="403.2" text-anchor="end" font-size="8.6" fill="#222">15</text>
<text x="62.1" y="443.6" text-anchor="end" font-size="8.6" fill="#222">0</text>
<text transform="translate(45.6 344.3) rotate(-90)" text-anchor="middle" font-size="8.4" fill="#111" stroke="#111" stroke-width="0.15">Percent %</text>
<text x="1037.9" y="281.9" font-size="8.6" fill="#222">800k</text>
<text x="1037.9" y="322.4" font-size="8.6" fill="#222">600k</text>
<text x="1037.9" y="362.8" font-size="8.6" fill="#222">400k</text>
<text x="1037.9" y="403.2" font-size="8.6" fill="#222">200k</text>
<text x="1037.9" y="443.6" font-size="8.6" fill="#222">0</text>
<text transform="translate(1070.4 344.7) rotate(90)" text-anchor="middle" font-size="8.6" fill="#111" stroke="#111" stroke-width="0.15">Amount $</text>
<text x="1090.8" y="281.9" font-size="8.6" fill="#222">10k</text>
<text x="1090.8" y="322.4" font-size="8.6" fill="#222">7.5k</text>
<text x="1090.8" y="362.8" font-size="8.6" fill="#222">5k</text>
<text x="1090.8" y="403.2" font-size="8.6" fill="#222">2.5k</text>
<text x="1090.8" y="443.6" font-size="8.6" fill="#222">0</text>
<text transform="translate(1118.5 344.4) rotate(90)" text-anchor="middle" font-size="8" fill="#111" stroke="#111" stroke-width="0.15">Count</text>
<line x1="1141.5" y1="304.7" x2="1152" y2="304.7" stroke="#d59b2d" stroke-width="1.2" stroke-dasharray="3.5 3"/>
<text x="1155.5" y="307.4" font-size="7.4" fill="#222">ACoS</text>
<line x1="1141.5" y1="316.7" x2="1152" y2="316.7" stroke="#666" stroke-width="1.2" stroke-dasharray="3.5 3"/>
<text x="1155.5" y="319.4" font-size="7.4" fill="#4a4a4a">TACoS</text>
<line x1="1155.5" y1="317.0" x2="1178.8" y2="317.0" stroke="#444" stroke-width="0.8"/>
<line x1="1141.5" y1="328.7" x2="1152" y2="328.7" stroke="#666" stroke-width="1.5"/>
<text x="1155.5" y="331.4" font-size="7.4" fill="#4a4a4a">CVR</text>
<line x1="1155.5" y1="329.0" x2="1171.1" y2="329.0" stroke="#444" stroke-width="0.8"/>
<line x1="1141.5" y1="340.7" x2="1152" y2="340.7" stroke="#666" stroke-width="1.5"/>
<text x="1155.5" y="343.4" font-size="7.4" fill="#4a4a4a">CTR</text>
<line x1="1155.5" y1="341.0" x2="1170.7" y2="341.0" stroke="#444" stroke-width="0.8"/>
<line x1="1141.5" y1="352.7" x2="1152" y2="352.7" stroke="#666" stroke-width="1.5"/>
<text x="1155.5" y="355.4" font-size="7.4" fill="#4a4a4a">Ad Sales</text>
<line x1="1155.5" y1="353.0" x2="1185.1" y2="353.0" stroke="#444" stroke-width="0.8"/>
<line x1="1141.5" y1="364.7" x2="1152" y2="364.7" stroke="#03a4b4" stroke-width="1.5"/>
<text x="1155.5" y="367.4" font-size="7.4" fill="#222">Total Sales</text>
<line x1="1141.5" y1="376.7" x2="1152" y2="376.7" stroke="#d33f3f" stroke-width="1.5"/>
<text x="1155.5" y="379.4" font-size="7.4" fill="#222">Spend</text>
<line x1="1141.5" y1="388.7" x2="1152" y2="388.7" stroke="#666" stroke-width="1.5"/>
<text x="1155.5" y="391.4" font-size="7.4" fill="#4a4a4a">Budget</text>
<line x1="1155.5" y1="389.0" x2="1178.9" y2="389.0" stroke="#444" stroke-width="0.8"/>
<line x1="1141.5" y1="400.7" x2="1152" y2="400.7" stroke="#666" stroke-width="1.5"/>
<text x="1155.5" y="403.4" font-size="7.4" fill="#4a4a4a">CPC</text>
<line x1="1155.5" y1="401.0" x2="1171.1" y2="401.0" stroke="#444" stroke-width="0.8"/>
<line x1="1141.5" y1="412.7" x2="1152" y2="412.7" stroke="#666" stroke-width="1.5"/>
<text x="1155.5" y="415.4" font-size="7.4" fill="#4a4a4a">ASP</text>
<line x1="1155.5" y1="413.0" x2="1170.3" y2="413.0" stroke="#444" stroke-width="0.8"/>
<circle cx="1147" cy="424.7" r="3.6" fill="#666"/>
<text x="1155.5" y="427.4" font-size="7.4" fill="#4a4a4a">Impressions</text>
<line x1="1155.5" y1="425.0" x2="1195.3" y2="425.0" stroke="#444" stroke-width="0.8"/>
<circle cx="1147" cy="436.7" r="3.6" fill="#666"/>
<text x="1155.5" y="439.4" font-size="7.4" fill="#4a4a4a">Clicks</text>
<line x1="1155.5" y1="437.0" x2="1175.2" y2="437.0" stroke="#444" stroke-width="0.8"/>
<circle cx="1147" cy="448.7" r="3.6" fill="#03a550"/>
<text x="1155.5" y="451.4" font-size="7.4" fill="#222">Bid Changes</text>
<line x1="72" y1="479.5" x2="1028" y2="479.5" stroke="#ccc"/>
<line x1="147.8" y1="480" x2="147.8" y2="506" stroke="#eee"/>
<line x1="257.3" y1="480" x2="257.3" y2="506" stroke="#eee"/>
<line x1="366.8" y1="480" x2="366.8" y2="506" stroke="#eee"/>
<line x1="476.3" y1="480" x2="476.3" y2="506" stroke="#eee"/>
<line x1="585.8" y1="480" x2="585.8" y2="506" stroke="#eee"/>
<line x1="695.3" y1="480" x2="695.3" y2="506" stroke="#eee"/>
<line x1="804.8" y1="480" x2="804.8" y2="506" stroke="#eee"/>
<text x="150.8" y="503.9" font-size="8.1" fill="#666">Jan 1, 2024</text>
<polyline points="72.0,505.7 73.5,505.8 75.0,505.6 76.5,505.8 78.0,505.6 79.5,505.7 81.0,505.8 82.5,505.6 84.0,505.8 85.5,505.7 87.0,505.8 88.5,505.8 90.0,505.7 91.5,505.6 93.0,505.8 94.5,505.7 96.0,505.6 97.5,505.5 99.0,505.6 100.5,505.7 102.0,505.5 103.5,505.8 105.0,505.5 106.5,505.7 108.0,505.8 109.5,505.8 111.0,505.7 112.5,505.6 114.0,505.7 115.5,505.6 117.0,505.6 118.5,505.7 120.0,505.6 121.5,505.8 123.0,505.8 124.5,505.7 126.0,505.6 127.5,505.7 129.0,505.7 130.5,505.6 132.0,505.7 133.5,505.7 135.0,505.6 136.5,505.6 138.0,505.7 139.5,505.6 141.0,505.6 142.5,505.5 144.0,505.6 145.5,505.7 147.0,505.5 148.5,505.8 150.0,505.7 151.5,505.6 153.0,505.8 154.5,505.7 156.0,505.8 157.5,505.6 159.0,505.6 160.5,505.6 162.0,505.5 163.5,505.7 165.0,505.6 166.5,505.6 168.0,505.6 169.5,505.7 171.0,505.5 172.5,505.5 174.0,505.7 175.5,505.6 177.0,505.8 178.5,505.6 180.0,505.6 181.5,505.5 183.0,505.6 184.5,505.7 186.0,505.7 187.5,505.6 189.0,505.8 190.5,505.7 192.0,505.7 193.5,505.8 195.0,505.8 196.5,505.6 198.0,505.8 199.5,505.7 201.0,505.7 202.5,505.5 204.0,505.8 205.5,505.7 207.0,505.6 208.5,505.5 210.0,505.6 211.5,505.5 213.0,505.7 214.5,505.7 216.0,505.7 217.5,505.5 219.0,505.5 220.5,505.8 222.0,505.7 223.5,505.7 225.0,505.7 226.5,505.7 228.0,505.6 229.5,505.7 231.0,505.8 232.5,505.7 234.0,505.7 235.5,505.6 237.0,505.5 238.5,505.6 240.0,505.6 241.5,505.6 243.0,505.6 244.5,505.8 246.0,505.5 247.5,505.6 249.0,505.5 250.5,505.6 252.0,505.7 253.5,505.7 255.0,505.8 256.5,505.6 258.0,505.8 259.5,505.8 261.0,505.7 262.5,505.8 264.0,505.7 265.5,505.8 267.0,505.8 268.5,505.8 270.0,505.8 271.5,505.7 273.0,505.8 274.5,505.5 276.0,505.6 277.5,505.8 279.0,505.7 280.5,505.7 282.0,505.7 283.5,505.8 285.0,505.5 286.5,505.5 288.0,505.7 289.5,505.7 291.0,505.8 292.5,505.8 294.0,505.7 295.5,505.7 297.0,505.6 298.5,505.8 300.0,505.8 301.5,505.5 303.0,505.6 304.5,505.8 306.0,505.6 307.5,505.8 309.0,505.6 310.5,505.5 312.0,505.5 313.5,505.6 315.0,505.7 316.5,505.7 318.0,505.7 319.5,505.6 321.0,505.6 322.5,505.6 324.0,505.7 325.5,505.7 327.0,505.6 328.5,505.5 330.0,505.5 331.5,505.6 333.0,505.6 334.5,505.6 336.0,505.7 337.5,505.6 339.0,505.7 340.5,505.8 342.0,505.8 343.5,505.7 345.0,505.7 346.5,505.6 348.0,505.5 349.5,505.7 351.0,505.5 352.5,505.5 354.0,505.5 355.5,505.7 357.0,505.7 358.5,505.7 360.0,505.7 361.5,505.7 363.0,505.6 364.5,505.5 366.0,505.5 367.5,505.7 369.0,505.6 370.5,505.6 372.0,505.8 373.5,505.6 375.0,505.5 376.5,505.6 378.0,505.6 379.5,505.7 381.0,505.7 382.5,505.6 384.0,505.7 385.5,505.6 387.0,505.5 388.5,505.7 390.0,505.7 391.5,505.5 393.0,505.6 394.5,505.7 396.0,505.8 397.5,505.8 399.0,505.5 400.5,505.6 402.0,505.8 403.5,505.6 405.0,505.5 406.5,505.6 408.0,505.7 409.5,505.6 411.0,505.8 412.5,505.8 414.0,505.5 415.5,505.6 417.0,505.6 418.5,505.5 420.0,505.7 421.5,505.5 423.0,505.6 424.5,505.7 426.0,505.7 427.5,505.7 429.0,505.7 430.5,505.6 432.0,505.7 433.5,505.7 435.0,505.8 436.5,505.5 438.0,505.7 439.5,505.7 441.0,505.6 442.5,505.5 444.0,505.7 445.5,505.5 447.0,505.6 448.5,505.6 450.0,505.6 451.5,505.8 453.0,505.7 454.5,505.7 456.0,505.8 457.5,505.6 459.0,505.7 460.5,505.7 462.0,505.6 463.5,505.6 465.0,505.7 466.5,505.6 468.0,505.6 469.5,505.6 471.0,505.8 472.5,505.6 474.0,505.7 475.5,505.7 477.0,505.6 478.5,505.6 480.0,505.6 481.5,505.6 483.0,505.5 484.5,505.7 486.0,505.6 487.5,505.6 489.0,505.6 490.5,505.6 492.0,505.7 493.5,505.6 495.0,505.7 496.5,505.5 498.0,505.6 499.5,505.5 501.0,505.5 502.5,505.7 504.0,505.6 505.5,505.5 507.0,505.5 508.5,505.8 510.0,505.8 511.5,505.7 513.0,505.8 514.5,505.7 516.0,505.8 517.5,505.6 519.0,505.6 520.5,505.5 522.0,505.8 523.5,505.6 525.0,505.6 526.5,505.8 528.0,505.5 529.5,505.5 531.0,505.7 532.5,505.5 534.0,505.7 535.5,505.7 537.0,505.5 538.5,505.6 540.0,505.8 541.5,505.7 543.0,505.6 544.5,505.7 546.0,505.7 547.5,505.7 549.0,505.6 550.5,505.8 552.0,505.6 553.5,505.7 555.0,505.8 556.5,505.7 558.0,505.6 559.5,505.6 561.0,505.8 562.5,505.5 564.0,505.6 565.5,505.5 567.0,505.8 568.5,505.7 570.0,505.8 571.5,505.6 573.0,505.7 574.5,505.8 576.0,505.7 577.5,505.5 579.0,505.6 580.5,505.7 582.0,505.8 583.5,505.5 585.0,505.6 586.5,505.6 588.0,505.8 589.5,505.8 591.0,505.6 592.5,505.7 594.0,505.8 595.5,505.5 597.0,505.6 598.5,505.6 600.0,505.8 601.5,505.5 603.0,505.8 604.5,505.5 606.0,505.7 607.5,505.7 609.0,505.6 610.5,505.5 612.0,505.7 613.5,505.8 615.0,505.6 616.5,505.7 618.0,505.8 619.5,505.8 621.0,505.8 622.5,505.7 624.0,505.7 625.5,505.7 627.0,505.6 628.5,505.7 630.0,505.6 631.5,505.7 633.0,505.7 634.5,505.8 636.0,505.7 637.5,505.8 639.0,505.6 640.5,505.6 642.0,505.7 643.5,505.7 645.0,505.5 646.5,505.8 648.0,505.6 649.5,505.7 651.0,505.7 652.5,505.5 654.0,505.7 655.5,505.6 657.0,505.6 658.5,505.5 660.0,505.7 661.5,505.6 663.0,505.6 664.5,505.6 666.0,505.7 667.5,505.7 669.0,505.8 670.5,505.8 672.0,505.8 673.5,505.6 675.0,505.7 676.5,505.8 678.0,505.8 679.5,505.5 681.0,505.5 682.5,505.6 684.0,505.7 685.5,505.7 687.0,505.7 688.5,505.7 690.0,505.8 691.5,505.7 693.0,505.7 694.5,505.5 696.0,505.5 697.5,505.6 699.0,505.7 700.5,505.5 702.0,505.7 703.5,505.7 705.0,505.8 706.5,505.7 708.0,505.7 709.5,505.6 711.0,505.7 712.5,505.6 714.0,505.8 715.5,505.7 717.0,505.8 718.5,505.7 720.0,505.8 721.5,505.8 723.0,505.7 724.5,505.7 726.0,505.6 727.5,505.6 729.0,505.6 730.5,505.6 732.0,505.6 733.5,505.5 735.0,505.7 736.5,505.7 738.0,505.5 739.5,505.8 741.0,505.6 742.5,505.6 744.0,505.8 745.5,505.5 747.0,505.5 748.5,505.6 750.0,505.6 751.5,505.6 753.0,505.8 754.5,505.6 756.0,505.6 757.5,505.5 759.0,505.6 760.5,505.6 762.0,505.6 763.5,505.5 765.0,505.6 766.5,505.6 768.0,505.7 769.5,505.8 771.0,505.8 772.5,505.7 774.0,505.8 775.5,505.5 777.0,505.6 778.5,505.6 780.0,505.6 781.5,505.6 783.0,505.7 784.5,505.8 786.0,505.6 787.5,505.6 789.0,505.6 790.5,505.6 792.0,505.6 793.5,505.8 795.0,505.6 796.5,505.7 798.0,505.8 799.5,505.7 801.0,505.6 802.5,505.7 804.0,505.6 805.5,505.5 807.0,505.7 808.5,505.7 810.0,505.7 811.5,505.6 813.0,505.6 814.5,505.6 816.0,505.6 817.5,505.8 819.0,505.8 820.5,505.7 822.0,505.6 823.5,505.7 825.0,505.6 826.5,505.8 828.0,505.8 829.5,505.7 831.0,505.6 832.5,505.6 834.0,505.6 835.5,505.7 837.0,505.6 838.5,505.7 840.0,505.7 841.5,505.8 843.0,505.5 844.5,505.7 846.0,505.5 847.5,505.5 849.0,505.8 850.5,505.7 852.0,505.6 853.5,505.5 855.0,505.7 856.5,505.7 858.0,505.7 859.5,505.5 861.0,505.7 862.5,505.6 864.0,505.8 865.5,505.6 867.0,505.5 868.5,505.8 870.0,505.6 871.5,505.6 873.0,505.5 874.5,505.6 876.0,505.7 877.5,505.5 879.0,505.7 880.5,505.8 882.0,505.8 883.5,505.7 885.0,505.7 886.5,505.7 888.0,505.8 889.5,505.7 891.0,505.7 892.5,505.5 894.0,505.8 895.5,505.6 897.0,505.5 898.5,505.8 900.0,505.5 901.5,505.6 903.0,505.5 904.5,505.7 906.0,505.7 907.5,505.7 909.0,505.5 910.5,505.6 912.0,505.7 913.5,505.7 915.0,505.7 916.5,505.8 918.0,505.8 919.5,505.5 921.0,505.7 922.5,505.5 924.0,505.7 925.5,505.7 927.0,505.6 928.5,505.7 930.0,505.7 931.5,505.5 933.0,505.5 934.5,505.6 936.0,505.6 937.5,505.5 939.0,505.5 940.5,505.6 942.0,505.6 943.5,505.8 945.0,505.6 946.5,505.7 948.0,505.6 949.5,505.6 951.0,505.7 952.5,505.8 954.0,505.5 955.5,505.8 957.0,505.7 958.5,505.7 960.0,505.7 961.5,505.6 963.0,505.5 964.5,505.7 966.0,505.6 967.5,505.7 969.0,505.6 970.5,505.7 972.0,505.7 973.5,505.8 975.0,505.7 976.5,505.5 978.0,505.7 979.5,505.7 981.0,505.5 982.5,505.5 984.0,505.7 985.5,505.8 987.0,505.7 988.5,505.8 990.0,505.7 991.5,505.8 993.0,505.7 994.5,505.7 996.0,505.6 997.5,505.5 999.0,505.6 1000.5,505.7 1002.0,505.7 1003.5,505.6 1005.0,505.7 1006.5,505.7 1008.0,505.8 1009.5,505.7 1011.0,505.5 1012.5,505.8 1014.0,505.6 1015.5,505.6 1017.0,505.5 1018.5,505.7 1020.0,505.7 1021.5,505.7 1023.0,505.7 1024.5,505.7 1026.0,505.5 1027.5,505.5" fill="none" stroke="#e0a878" stroke-width="0.9" stroke-linejoin="round"/>
<polyline points="72.0,505.4 73.5,505.6 75.0,505.6 76.5,505.5 78.0,505.4 79.5,505.5 81.0,505.5 82.5,505.6 84.0,505.5 85.5,505.4 87.0,505.4 88.5,505.4 90.0,505.4 91.5,505.6 93.0,505.6 94.5,505.6 96.0,505.5 97.5,505.5 99.0,505.4 100.5,505.5 102.0,505.5 103.5,505.4 105.0,505.5 106.5,505.5 108.0,505.6 109.5,505.4 111.0,505.6 112.5,505.4 114.0,505.5 115.5,505.5 117.0,505.6 118.5,505.5 120.0,505.5 121.5,505.5 123.0,505.6 124.5,505.6 126.0,505.5 127.5,505.5 129.0,505.5 130.5,505.6 132.0,505.5 133.5,505.6 135.0,505.5 136.5,505.5 138.0,505.4 139.5,505.5 141.0,505.4 142.5,505.5 144.0,505.6 145.5,505.6 147.0,505.4 148.5,505.5 150.0,505.5 151.5,505.6 153.0,505.5 154.5,505.5 156.0,505.5 157.5,505.5 159.0,505.5 160.5,505.4 162.0,505.6 163.5,505.6 165.0,505.5 166.5,505.5 168.0,505.5 169.5,505.6 171.0,505.4 172.5,505.5 174.0,505.5 175.5,505.6 177.0,505.4 178.5,505.5 180.0,505.4 181.5,505.6 183.0,505.6 184.5,505.4 186.0,505.5 187.5,505.4 189.0,505.5 190.5,505.6 192.0,505.6 193.5,505.5 195.0,505.5 196.5,505.4 198.0,505.6 199.5,505.5 201.0,505.6 202.5,505.4 204.0,505.6 205.5,505.6 207.0,505.6 208.5,505.5 210.0,505.4 211.5,505.4 213.0,505.5 214.5,505.4 216.0,505.4 217.5,505.5 219.0,505.6 220.5,505.4 222.0,505.5 223.5,505.6 225.0,505.5 226.5,505.5 228.0,505.5 229.5,505.5 231.0,505.6 232.5,505.6 234.0,505.5 235.5,505.5 237.0,505.4 238.5,505.6 240.0,505.4 241.5,505.6 243.0,505.5 244.5,505.4 246.0,505.4 247.5,505.5 249.0,505.6 250.5,505.5 252.0,505.5 253.5,505.4 255.0,505.6 256.5,505.5 258.0,505.4 259.5,505.6 261.0,505.5 262.5,505.4 264.0,505.4 265.5,505.6 267.0,505.6 268.5,505.6 270.0,505.4 271.5,505.5 273.0,505.5 274.5,505.4 276.0,505.5 277.5,505.5 279.0,505.4 280.5,505.5 282.0,505.5 283.5,505.5 285.0,505.5 286.5,505.5 288.0,505.6 289.5,505.4 291.0,505.4 292.5,505.5 294.0,505.4 295.5,505.6 297.0,505.6 298.5,505.5 300.0,505.4 301.5,505.4 303.0,505.5 304.5,505.5 306.0,505.5 307.5,505.5 309.0,505.4 310.5,505.6 312.0,505.4 313.5,505.5 315.0,505.4 316.5,505.4 318.0,505.5 319.5,505.5 321.0,505.5 322.5,505.5 324.0,505.4 325.5,505.6 327.0,505.6 328.5,505.4 330.0,505.6 331.5,505.6 333.0,505.6 334.5,505.5 336.0,505.5 337.5,505.4 339.0,505.4 340.5,505.4 342.0,505.5 343.5,505.6 345.0,505.6 346.5,505.5 348.0,505.5 349.5,505.5 351.0,505.6 352.5,505.5 354.0,505.5 355.5,505.5 357.0,505.5 358.5,505.4 360.0,505.5 361.5,505.6 363.0,505.4 364.5,505.5 366.0,505.5 367.5,505.5 369.0,505.5 370.5,505.6 372.0,505.6 373.5,505.6 375.0,505.6 376.5,505.4 378.0,505.5 379.5,505.5 381.0,505.5 382.5,505.4 384.0,505.5 385.5,505.6 387.0,505.4 388.5,505.5 390.0,505.4 391.5,505.6 393.0,505.5 394.5,505.4 396.0,505.4 397.5,505.4 399.0,505.6 400.5,505.5 402.0,505.6 403.5,505.6 405.0,505.4 406.5,505.5 408.0,505.4 409.5,505.5 411.0,505.4 412.5,505.5 414.0,505.5 415.5,505.4 417.0,505.4 418.5,505.6 420.0,505.5 421.5,505.5 423.0,505.6 424.5,505.5 426.0,505.6 427.5,505.6 429.0,505.5 430.5,505.5 432.0,505.5 433.5,505.6 435.0,505.6 436.5,505.5 438.0,505.5 439.5,505.6 441.0,505.5 442.5,505.6 444.0,505.4 445.5,505.5 447.0,505.6 448.5,505.6 450.0,505.5 451.5,505.5 453.0,505.5 454.5,505.6 456.0,505.6 457.5,505.5 459.0,505.5 460.5,505.5 462.0,505.5 463.5,505.4 465.0,505.5 466.5,505.5 468.0,505.5 469.5,505.5 471.0,505.4 472.5,505.4 474.0,505.5 475.5,505.6 477.0,505.5 478.5,505.6 480.0,505.6 481.5,505.4 483.0,505.5 484.5,505.4 486.0,505.5 487.5,505.4 489.0,505.5 490.5,505.6 492.0,505.6 493.5,505.5 495.0,505.5 496.5,505.4 498.0,505.6 499.5,505.5 501.0,505.5 502.5,505.5 504.0,505.6 505.5,505.5 507.0,505.5 508.5,505.4 510.0,505.6 511.5,505.5 513.0,505.4 514.5,505.4 516.0,505.6 517.5,505.6 519.0,505.4 520.5,505.4 522.0,505.5 523.5,505.6 525.0,505.4 526.5,505.5 528.0,505.4 529.5,505.5 531.0,505.4 532.5,505.6 534.0,505.4 535.5,505.6 537.0,505.5 538.5,505.4 540.0,505.4 541.5,505.6 543.0,505.6 544.5,505.5 546.0,505.5 547.5,505.5 549.0,505.6 550.5,505.6 552.0,505.5 553.5,505.4 555.0,505.6 556.5,505.5 558.0,505.4 559.5,505.6 561.0,505.4 562.5,505.6 564.0,505.5 565.5,505.5 567.0,505.5 568.5,505.5 570.0,505.5 571.5,505.5 573.0,505.5 574.5,505.5 576.0,505.5 577.5,505.5 579.0,505.6 580.5,505.5 582.0,505.5 583.5,505.6 585.0,505.4 586.5,505.4 588.0,505.5 589.5,505.6 591.0,505.5 592.5,505.6 594.0,505.6 595.5,505.5 597.0,505.6 598.5,505.5 600.0,505.5 601.5,505.6 603.0,505.5 604.5,505.6 606.0,505.5 607.5,505.4 609.0,505.5 610.5,505.6 612.0,505.5 613.5,505.5 615.0,505.4 616.5,505.5 618.0,505.1 619.5,504.7 621.0,504.4 622.5,504.2 624.0,504.6 625.5,505.0 627.0,505.4 628.5,505.4 630.0,505.4 631.5,505.6 633.0,505.4 634.5,505.4 636.0,505.6 637.5,505.5 639.0,505.4 640.5,505.6 642.0,505.4 643.5,505.5 645.0,505.4 646.5,505.6 648.0,505.5 649.5,505.4 651.0,505.6 652.5,505.5 654.0,505.5 655.5,505.5 657.0,505.6 658.5,505.6 660.0,505.6 661.5,505.4 663.0,505.5 664.5,505.4 666.0,505.6 667.5,505.4 669.0,505.6 670.5,505.5 672.0,505.5 673.5,505.5 675.0,505.4 676.5,505.5 678.0,505.5 679.5,505.4 681.0,505.6 682.5,505.4 684.0,505.5 685.5,505.5 687.0,505.4 688.5,505.5 690.0,505.4 691.5,505.5 693.0,505.5 694.5,505.4 696.0,505.5 697.5,505.6 699.0,505.5 700.5,505.6 702.0,505.4 703.5,505.5 705.0,505.5 706.5,505.4 708.0,505.5 709.5,505.5 711.0,505.5 712.5,505.6 714.0,505.6 715.5,505.6 717.0,505.5 718.5,505.5 720.0,505.5 721.5,505.4 723.0,505.6 724.5,505.6 726.0,505.5 727.5,505.6 729.0,505.6 730.5,505.5 732.0,505.6 733.5,505.5 735.0,505.6 736.5,505.5 738.0,505.5 739.5,505.6 741.0,505.5 742.5,505.5 744.0,505.6 745.5,505.4 747.0,505.6 748.5,505.6 750.0,505.6 751.5,505.5 753.0,505.4 754.5,505.4 756.0,505.5 757.5,505.5 759.0,505.6 760.5,505.5 762.0,505.5 763.5,505.5 765.0,505.5 766.5,505.5 768.0,505.4 769.5,505.5 771.0,505.6 772.5,505.4 774.0,505.6 775.5,505.5 777.0,505.5 778.5,505.6 780.0,505.6 781.5,505.4 783.0,505.6 784.5,505.5 786.0,505.4 787.5,505.6 789.0,505.6 790.5,505.5 792.0,505.5 793.5,505.5 795.0,505.4 796.5,505.6 798.0,505.5 799.5,505.5 801.0,505.6 802.5,505.4 804.0,505.4 805.5,505.5 807.0,505.6 808.5,505.4 810.0,505.5 811.5,505.5 813.0,505.5 814.5,505.5 816.0,505.6 817.5,505.6 819.0,505.6 820.5,505.6 822.0,505.5 823.5,505.5 825.0,505.5 826.5,505.4 828.0,505.5 829.5,505.5 831.0,505.5 832.5,505.5 834.0,505.4 835.5,505.5 837.0,505.5 838.5,505.5 840.0,505.4 841.5,505.6 843.0,505.4 844.5,505.6 846.0,505.5 847.5,505.6 849.0,505.5 850.5,505.4 852.0,505.5 853.5,505.5 855.0,505.4 856.5,505.5 858.0,505.6 859.5,505.4 861.0,505.5 862.5,505.5 864.0,505.5 865.5,505.4 867.0,505.5 868.5,504.6 870.0,503.6 871.5,504.6 873.0,505.5 874.5,505.5 876.0,505.5 877.5,505.5 879.0,505.6 880.5,505.5 882.0,505.6 883.5,505.4 885.0,505.6 886.5,505.6 888.0,505.6 889.5,505.4 891.0,505.5 892.5,505.6 894.0,505.6 895.5,505.6 897.0,505.5 898.5,505.5 900.0,505.5 901.5,505.5 903.0,505.6 904.5,505.5 906.0,505.5 907.5,505.4 909.0,505.4 910.5,505.4 912.0,505.6 913.5,505.4 915.0,505.4 916.5,505.4 918.0,505.6 919.5,505.6 921.0,505.6 922.5,505.6 924.0,505.4 925.5,505.4 927.0,505.5 928.5,505.4 930.0,505.5 931.5,505.5 933.0,505.6 934.5,505.6 936.0,505.4 937.5,505.6 939.0,505.5 940.5,505.5 942.0,505.6 943.5,505.5 945.0,505.5 946.5,505.5 948.0,505.5 949.5,505.5 951.0,505.4 952.5,505.5 954.0,505.4 955.5,505.5 957.0,505.6 958.5,505.5 960.0,505.5 961.5,505.4 963.0,505.5 964.5,505.5 966.0,505.5 967.5,505.6 969.0,505.4 970.5,505.6 972.0,505.4 973.5,505.6 975.0,505.6 976.5,505.6 978.0,505.4 979.5,505.4 981.0,505.6 982.5,505.5 984.0,505.5 985.5,505.4 987.0,505.6 988.5,505.5 990.0,505.5 991.5,505.4 993.0,505.5 994.5,505.4 996.0,505.5 997.5,505.6 999.0,505.5 1000.5,505.5 1002.0,505.6 1003.5,505.5 1005.0,505.6 1006.5,505.4 1008.0,505.5 1009.5,505.4 1011.0,505.5 1012.5,505.5 1014.0,505.5 1015.5,505.5 1017.0,505.4 1018.5,505.6 1020.0,505.4 1021.5,505.6 1023.0,505.6 1024.5,505.5 1026.0,505.4 1027.5,505.5" fill="none" stroke="#e07070" stroke-width="0.6" stroke-linejoin="round"/>
<polyline points="72.0,504.1 73.5,503.5 75.0,504.3 76.5,504.0 78.0,504.0 79.5,503.7 81.0,503.7 82.5,503.8 84.0,504.2 85.5,504.2 87.0,504.4 88.5,503.6 90.0,503.8 91.5,503.7 93.0,504.4 94.5,504.1 96.0,503.7 97.5,503.9 99.0,504.4 100.5,503.4 102.0,501.6 103.5,503.4 105.0,504.4 106.5,504.2 108.0,503.8 109.5,503.6 111.0,504.4 112.5,504.4 114.0,504.3 115.5,504.2 117.0,504.0 118.5,504.4 120.0,504.2 121.5,504.4 123.0,503.4 124.5,503.7 126.0,504.5 127.5,503.4 129.0,504.5 130.5,504.1 132.0,503.4 133.5,503.6 135.0,503.7 136.5,504.1 138.0,504.4 139.5,503.8 141.0,504.5 142.5,504.4 144.0,504.1 145.5,504.6 147.0,503.3 148.5,499.4 150.0,500.7 151.5,504.0 153.0,503.8 154.5,504.0 156.0,504.4 157.5,503.9 159.0,504.1 160.5,503.7 162.0,503.5 163.5,504.1 165.0,503.9 166.5,503.7 168.0,504.1 169.5,504.3 171.0,503.7 172.5,503.5 174.0,503.7 175.5,503.8 177.0,503.6 178.5,503.8 180.0,503.8 181.5,504.1 183.0,504.2 184.5,503.8 186.0,504.5 187.5,504.1 189.0,503.7 190.5,503.7 192.0,503.8 193.5,504.3 195.0,504.1 196.5,504.1 198.0,503.9 199.5,504.1 201.0,503.8 202.5,503.5 204.0,504.4 205.5,503.8 207.0,503.7 208.5,504.1 210.0,504.0 211.5,503.4 213.0,504.6 214.5,503.9 216.0,504.4 217.5,503.7 219.0,503.5 220.5,504.0 222.0,504.5 223.5,503.9 225.0,504.0 226.5,503.7 228.0,504.0 229.5,503.8 231.0,503.6 232.5,504.0 234.0,504.1 235.5,503.5 237.0,504.3 238.5,503.8 240.0,504.1 241.5,503.7 243.0,504.5 244.5,503.4 246.0,504.2 247.5,504.5 249.0,504.3 250.5,504.1 252.0,504.6 253.5,504.1 255.0,504.1 256.5,503.8 258.0,504.2 259.5,504.3 261.0,504.3 262.5,503.7 264.0,503.5 265.5,504.0 267.0,504.3 268.5,503.6 270.0,504.1 271.5,504.3 273.0,504.4 274.5,503.7 276.0,503.6 277.5,503.8 279.0,504.0 280.5,503.9 282.0,504.3 283.5,503.4 285.0,503.4 286.5,502.4 288.0,502.7 289.5,503.6 291.0,504.0 292.5,504.2 294.0,503.9 295.5,504.4 297.0,503.6 298.5,504.2 300.0,503.6 301.5,504.3 303.0,504.1 304.5,504.3 306.0,504.1 307.5,504.4 309.0,504.6 310.5,503.7 312.0,504.3 313.5,504.3 315.0,504.2 316.5,504.0 318.0,504.1 319.5,503.8 321.0,503.8 322.5,504.2 324.0,503.5 325.5,503.6 327.0,504.5 328.5,503.6 330.0,503.5 331.5,503.7 333.0,504.4 334.5,503.6 336.0,503.8 337.5,504.6 339.0,504.6 340.5,503.5 342.0,503.8 343.5,504.3 345.0,504.5 346.5,504.4 348.0,504.3 349.5,503.7 351.0,504.2 352.5,504.4 354.0,503.5 355.5,503.6 357.0,504.4 358.5,503.5 360.0,503.9 361.5,503.7 363.0,503.8 364.5,503.5 366.0,503.7 367.5,503.6 369.0,504.4 370.5,503.8 372.0,504.0 373.5,503.7 375.0,504.1 376.5,503.5 378.0,503.9 379.5,504.3 381.0,504.3 382.5,504.4 384.0,504.0 385.5,504.5 387.0,504.0 388.5,504.4 390.0,504.0 391.5,504.0 393.0,504.0 394.5,503.6 396.0,504.6 397.5,503.6 399.0,504.0 400.5,503.9 402.0,503.8 403.5,503.0 405.0,495.2 406.5,498.9 408.0,503.4 409.5,504.5 411.0,503.8 412.5,503.8 414.0,504.6 415.5,503.9 417.0,503.8 418.5,503.5 420.0,504.2 421.5,503.4 423.0,504.0 424.5,504.0 426.0,503.5 427.5,504.6 429.0,503.7 430.5,503.8 432.0,504.2 433.5,503.6 435.0,504.2 436.5,504.0 438.0,504.0 439.5,503.7 441.0,504.3 442.5,504.1 444.0,504.1 445.5,503.9 447.0,503.6 448.5,504.2 450.0,503.6 451.5,504.1 453.0,504.0 454.5,504.3 456.0,504.0 457.5,503.4 459.0,503.8 460.5,503.6 462.0,504.2 463.5,504.2 465.0,504.2 466.5,503.9 468.0,503.8 469.5,503.7 471.0,504.6 472.5,503.7 474.0,503.5 475.5,503.9 477.0,504.5 478.5,504.2 480.0,504.6 481.5,504.4 483.0,503.5 484.5,503.9 486.0,503.8 487.5,503.7 489.0,503.5 490.5,503.9 492.0,503.9 493.5,503.8 495.0,503.8 496.5,503.9 498.0,503.8 499.5,504.3 501.0,503.8 502.5,504.1 504.0,503.7 505.5,504.5 507.0,504.4 508.5,504.6 510.0,503.7 511.5,503.5 513.0,498.2 514.5,487.9 516.0,499.8 517.5,503.7 519.0,503.9 520.5,504.3 522.0,504.2 523.5,504.1 525.0,504.2 526.5,504.1 528.0,503.8 529.5,503.5 531.0,504.5 532.5,503.9 534.0,504.6 535.5,504.5 537.0,503.6 538.5,503.9 540.0,503.5 541.5,504.1 543.0,504.6 544.5,504.1 546.0,503.9 547.5,503.5 549.0,503.4 550.5,504.0 552.0,504.1 553.5,504.5 555.0,503.8 556.5,504.3 558.0,504.4 559.5,504.6 561.0,504.6 562.5,503.8 564.0,504.5 565.5,503.4 567.0,504.5 568.5,503.6 570.0,504.4 571.5,504.6 573.0,503.7 574.5,504.3 576.0,503.7 577.5,504.4 579.0,504.5 580.5,503.7 582.0,503.7 583.5,503.6 585.0,503.7 586.5,504.5 588.0,503.8 589.5,503.7 591.0,504.0 592.5,503.5 594.0,504.3 595.5,503.4 597.0,503.7 598.5,504.6 600.0,504.6 601.5,503.8 603.0,503.6 604.5,504.5 606.0,504.2 607.5,503.7 609.0,504.4 610.5,503.6 612.0,504.0 613.5,504.5 615.0,504.2 616.5,503.9 618.0,504.1 619.5,503.8 621.0,504.0 622.5,502.1 624.0,500.3 625.5,498.4 627.0,496.6 628.5,498.4 630.0,500.3 631.5,502.1 633.0,503.5 634.5,503.7 636.0,503.9 637.5,504.2 639.0,503.1 640.5,502.4 642.0,503.8 643.5,503.6 645.0,504.2 646.5,503.9 648.0,503.4 649.5,503.6 651.0,503.9 652.5,504.2 654.0,504.1 655.5,503.5 657.0,504.1 658.5,503.8 660.0,503.9 661.5,503.5 663.0,503.6 664.5,504.3 666.0,504.6 667.5,504.3 669.0,504.1 670.5,503.9 672.0,503.6 673.5,503.5 675.0,504.5 676.5,503.6 678.0,503.6 679.5,503.6 681.0,503.9 682.5,504.3 684.0,503.6 685.5,503.6 687.0,503.8 688.5,503.5 690.0,504.2 691.5,504.5 693.0,503.9 694.5,503.6 696.0,504.4 697.5,503.7 699.0,503.5 700.5,504.3 702.0,503.9 703.5,503.8 705.0,504.0 706.5,504.4 708.0,504.3 709.5,503.7 711.0,503.7 712.5,504.0 714.0,504.5 715.5,503.6 717.0,503.7 718.5,504.3 720.0,503.9 721.5,503.5 723.0,503.5 724.5,504.0 726.0,504.0 727.5,503.9 729.0,504.4 730.5,504.4 732.0,504.1 733.5,502.8 735.0,501.4 736.5,500.1 738.0,500.5 739.5,501.9 741.0,503.2 742.5,504.5 744.0,503.4 745.5,504.2 747.0,504.5 748.5,503.8 750.0,503.7 751.5,504.4 753.0,503.9 754.5,504.2 756.0,504.0 757.5,504.6 759.0,504.6 760.5,503.4 762.0,503.6 763.5,504.0 765.0,503.9 766.5,504.3 768.0,503.7 769.5,504.1 771.0,503.5 772.5,503.7 774.0,503.6 775.5,503.4 777.0,504.3 778.5,504.6 780.0,504.4 781.5,504.4 783.0,504.5 784.5,504.5 786.0,503.9 787.5,503.6 789.0,504.1 790.5,503.5 792.0,503.5 793.5,504.5 795.0,503.9 796.5,504.1 798.0,504.5 799.5,503.4 801.0,504.3 802.5,503.4 804.0,502.1 805.5,503.4 807.0,503.8 808.5,504.1 810.0,504.1 811.5,504.4 813.0,503.4 814.5,503.4 816.0,504.3 817.5,504.6 819.0,504.3 820.5,504.2 822.0,503.5 823.5,503.5 825.0,503.6 826.5,504.5 828.0,503.7 829.5,503.7 831.0,503.8 832.5,503.4 834.0,504.5 835.5,504.4 837.0,503.7 838.5,503.5 840.0,503.8 841.5,504.2 843.0,503.9 844.5,503.7 846.0,504.5 847.5,504.2 849.0,504.3 850.5,504.5 852.0,504.0 853.5,504.4 855.0,504.3 856.5,504.4 858.0,503.8 859.5,504.6 861.0,503.7 862.5,504.4 864.0,504.6 865.5,503.5 867.0,504.3 868.5,501.5 870.0,486.2 871.5,493.4 873.0,504.4 874.5,497.5 876.0,499.9 877.5,503.5 879.0,503.6 880.5,496.4 882.0,499.1 883.5,504.2 885.0,503.6 886.5,504.0 888.0,503.8 889.5,504.4 891.0,504.3 892.5,504.5 894.0,503.7 895.5,503.9 897.0,504.4 898.5,503.6 900.0,504.3 901.5,504.1 903.0,504.4 904.5,504.3 906.0,503.6 907.5,504.2 909.0,504.4 910.5,504.0 912.0,504.2 913.5,503.5 915.0,504.5 916.5,503.4 918.0,504.5 919.5,503.5 921.0,503.8 922.5,504.3 924.0,504.0 925.5,504.3 927.0,504.3 928.5,504.4 930.0,504.2 931.5,503.4 933.0,503.4 934.5,503.5 936.0,504.5 937.5,504.3 939.0,503.5 940.5,504.5 942.0,503.7 943.5,504.2 945.0,503.4 946.5,504.6 948.0,503.6 949.5,504.2 951.0,504.4 952.5,504.6 954.0,503.6 955.5,504.0 957.0,504.4 958.5,504.1 960.0,503.5 961.5,504.3 963.0,503.9 964.5,504.4 966.0,504.4 967.5,503.7 969.0,503.7 970.5,504.4 972.0,504.5 973.5,504.5 975.0,503.9 976.5,504.0 978.0,504.3 979.5,504.4 981.0,503.9 982.5,503.8 984.0,503.6 985.5,503.9 987.0,504.4 988.5,498.0 990.0,487.1 991.5,498.0 993.0,503.7 994.5,504.5 996.0,503.6 997.5,504.2 999.0,503.6 1000.5,503.6 1002.0,504.0 1003.5,504.6 1005.0,503.5 1006.5,504.0 1008.0,503.6 1009.5,504.3 1011.0,504.4 1012.5,503.6 1014.0,504.2 1015.5,504.4 1017.0,504.2 1018.5,503.9 1020.0,504.6 1021.5,504.0 1023.0,504.1 1024.5,503.1 1026.0,503.6 1027.5,503.7" fill="none" stroke="#4db8cf" stroke-width="0.9" stroke-linejoin="round"/>
<rect x="908.4" y="479.2" width="119.3" height="27" fill="rgba(102,133,255,0.28)"/>
<path d="M908.4 506 V479.4 H1027.7 V506" fill="none" stroke="#999" stroke-width="0.8"/>
<rect x="905.4" y="487.7" width="6" height="10.3" rx="1" fill="#e8e8e8" stroke="#999" stroke-width="0.8"/>
<line x1="907.9" y1="490" x2="907.9" y2="495.5" stroke="#fff" stroke-width="1"/>
<rect x="1024.6" y="487.7" width="6" height="10.3" rx="1" fill="#e8e8e8" stroke="#999" stroke-width="0.8"/>
<line x1="1027.1" y1="490" x2="1027.1" y2="495.5" stroke="#fff" stroke-width="1"/>
<rect x="72.5" y="508.4" width="955.3" height="7" rx="3.5" fill="#fff" stroke="#ddd" stroke-width="0.8"/>
<rect x="909.1" y="508.7" width="118.7" height="6.9" rx="3.45" fill="#cccccc"/>
<line x1="71.6" y1="624.5" x2="367.0" y2="624.5" stroke="#e6e6e6"/>
<line x1="71.6" y1="668.4" x2="367.0" y2="668.4" stroke="#e6e6e6"/>
<line x1="71.6" y1="712.0" x2="367.0" y2="712.0" stroke="#e6e6e6"/>
<line x1="71.6" y1="755.6" x2="367.0" y2="755.6" stroke="#e6e6e6"/>
<line x1="71.6" y1="798.9" x2="367.0" y2="798.9" stroke="#ccc" />
<line x1="71.5" y1="624" x2="71.5" y2="798" stroke="#e6e6e6"/>
<line x1="367.5" y1="624" x2="367.5" y2="798" stroke="#e6e6e6"/>
<line x1="71.6" y1="798.5" x2="71.6" y2="805" stroke="#ccc"/>
<line x1="94.3" y1="798.5" x2="94.3" y2="805" stroke="#ccc"/>
<line x1="117.0" y1="798.5" x2="117.0" y2="805" stroke="#ccc"/>
<line x1="139.8" y1="798.5" x2="139.8" y2="805" stroke="#ccc"/>
<line x1="162.5" y1="798.5" x2="162.5" y2="805" stroke="#ccc"/>
<line x1="185.2" y1="798.5" x2="185.2" y2="805" stroke="#ccc"/>
<line x1="207.9" y1="798.5" x2="207.9" y2="805" stroke="#ccc"/>
<line x1="230.7" y1="798.5" x2="230.7" y2="805" stroke="#ccc"/>
<line x1="253.4" y1="798.5" x2="253.4" y2="805" stroke="#ccc"/>
<line x1="276.1" y1="798.5" x2="276.1" y2="805" stroke="#ccc"/>
<line x1="298.8" y1="798.5" x2="298.8" y2="805" stroke="#ccc"/>
<line x1="321.6" y1="798.5" x2="321.6" y2="805" stroke="#ccc"/>
<line x1="344.3" y1="798.5" x2="344.3" y2="805" stroke="#ccc"/>
<line x1="367.0" y1="798.5" x2="367.0" y2="805" stroke="#ccc"/>
<path d="M77.3 740.5 V719.9 a2 2 0 0 1 2 -2 H86.6 a2 2 0 0 1 2 2 V740.5 Z" fill="#1cf28c"/>
<rect x="77.3" y="740.0" width="11.3" height="58.4" fill="#45c6fd"/>
<line x1="77.3" y1="740.0" x2="88.6" y2="740.0" stroke="#fff" stroke-width="0.6" stroke-opacity="0.6"/>
<text transform="translate(87.0 812.3) rotate(-45)" text-anchor="end" font-size="9" fill="#222">Aug 11</text>
<path d="M100.0 739.6 V719.0 a2 2 0 0 1 2 -2 H109.3 a2 2 0 0 1 2 2 V739.6 Z" fill="#1cf28c"/>
<rect x="100.0" y="739.1" width="11.3" height="59.3" fill="#45c6fd"/>
<line x1="100.0" y1="739.1" x2="111.3" y2="739.1" stroke="#fff" stroke-width="0.6" stroke-opacity="0.6"/>
<text transform="translate(109.7 812.3) rotate(-45)" text-anchor="end" font-size="9" fill="#222">Aug 18</text>
<path d="M122.8 739.6 V723.1 a2 2 0 0 1 2 -2 H132.1 a2 2 0 0 1 2 2 V739.6 Z" fill="#1cf28c"/>
<rect x="122.8" y="739.1" width="11.3" height="59.3" fill="#45c6fd"/>
<line x1="122.8" y1="739.1" x2="134.1" y2="739.1" stroke="#fff" stroke-width="0.6" stroke-opacity="0.6"/>
<text transform="translate(132.4 812.3) rotate(-45)" text-anchor="end" font-size="9" fill="#222">Aug 25</text>
<path d="M145.5 739.9 V720.2 a2 2 0 0 1 2 -2 H154.8 a2 2 0 0 1 2 2 V739.9 Z" fill="#1cf28c"/>
<rect x="145.5" y="739.4" width="11.3" height="59.0" fill="#45c6fd"/>
<line x1="145.5" y1="739.4" x2="156.8" y2="739.4" stroke="#fff" stroke-width="0.6" stroke-opacity="0.6"/>
<text transform="translate(155.1 812.3) rotate(-45)" text-anchor="end" font-size="9" fill="#222">Sep 1</text>
<path d="M168.2 739.9 V723.0 a2 2 0 0 1 2 -2 H177.5 a2 2 0 0 1 2 2 V739.9 Z" fill="#1cf28c"/>
<rect x="168.2" y="739.4" width="11.3" height="59.0" fill="#45c6fd"/>
<line x1="168.2" y1="739.4" x2="179.5" y2="739.4" stroke="#fff" stroke-width="0.6" stroke-opacity="0.6"/>
<text transform="translate(177.9 812.3) rotate(-45)" text-anchor="end" font-size="9" fill="#222">Sep 8</text>
<path d="M190.9 739.9 V724.3 a2 2 0 0 1 2 -2 H200.2 a2 2 0 0 1 2 2 V739.9 Z" fill="#1cf28c"/>
<rect x="190.9" y="739.4" width="11.3" height="59.0" fill="#45c6fd"/>
<line x1="190.9" y1="739.4" x2="202.2" y2="739.4" stroke="#fff" stroke-width="0.6" stroke-opacity="0.6"/>
<text transform="translate(200.6 812.3) rotate(-45)" text-anchor="end" font-size="9" fill="#222">Sep 15</text>
<path d="M213.6 741.7 V726.9 a2 2 0 0 1 2 -2 H222.9 a2 2 0 0 1 2 2 V741.7 Z" fill="#1cf28c"/>
<rect x="213.6" y="741.2" width="11.3" height="57.2" fill="#45c6fd"/>
<line x1="213.6" y1="741.2" x2="224.9" y2="741.2" stroke="#fff" stroke-width="0.6" stroke-opacity="0.6"/>
<text transform="translate(223.3 812.3) rotate(-45)" text-anchor="end" font-size="9" fill="#222">Sep 22</text>
<path d="M236.4 743.7 V726.9 a2 2 0 0 1 2 -2 H245.7 a2 2 0 0 1 2 2 V743.7 Z" fill="#1cf28c"/>
<rect x="236.4" y="743.2" width="11.3" height="55.2" fill="#45c6fd"/>
<line x1="236.4" y1="743.2" x2="247.7" y2="743.2" stroke="#fff" stroke-width="0.6" stroke-opacity="0.6"/>
<text transform="translate(246.0 812.3) rotate(-45)" text-anchor="end" font-size="9" fill="#222">Sep 29</text>
<path d="M259.1 696.9 V661.8 a2 2 0 0 1 2 -2 H268.4 a2 2 0 0 1 2 2 V696.9 Z" fill="#1cf28c"/>
<rect x="259.1" y="696.4" width="11.3" height="102.0" fill="#45c6fd"/>
<line x1="259.1" y1="696.4" x2="270.4" y2="696.4" stroke="#fff" stroke-width="0.6" stroke-opacity="0.6"/>
<text transform="translate(268.7 812.3) rotate(-45)" text-anchor="end" font-size="9" fill="#222">Oct 6</text>
<path d="M281.8 749.2 V736.2 a2 2 0 0 1 2 -2 H291.1 a2 2 0 0 1 2 2 V749.2 Z" fill="#1cf28c"/>
<rect x="281.8" y="748.7" width="11.3" height="49.7" fill="#45c6fd"/>
<line x1="281.8" y1="748.7" x2="293.1" y2="748.7" stroke="#fff" stroke-width="0.6" stroke-opacity="0.6"/>
<text transform="translate(291.5 812.3) rotate(-45)" text-anchor="end" font-size="9" fill="#222">Oct 13</text>
<path d="M304.5 745.7 V733.0 a2 2 0 0 1 2 -2 H313.8 a2 2 0 0 1 2 2 V745.7 Z" fill="#1cf28c"/>
<rect x="304.5" y="745.2" width="11.3" height="53.2" fill="#45c6fd"/>
<line x1="304.5" y1="745.2" x2="315.8" y2="745.2" stroke="#fff" stroke-width="0.6" stroke-opacity="0.6"/>
<text transform="translate(314.2 812.3) rotate(-45)" text-anchor="end" font-size="9" fill="#222">Oct 20</text>
<path d="M327.3 745.5 V733.0 a2 2 0 0 1 2 -2 H336.6 a2 2 0 0 1 2 2 V745.5 Z" fill="#1cf28c"/>
<rect x="327.3" y="745.0" width="11.3" height="53.4" fill="#45c6fd"/>
<line x1="327.3" y1="745.0" x2="338.6" y2="745.0" stroke="#fff" stroke-width="0.6" stroke-opacity="0.6"/>
<text transform="translate(336.9 812.3) rotate(-45)" text-anchor="end" font-size="9" fill="#222">Oct 27</text>
<path d="M350.0 768.4 V764.1 a2 2 0 0 1 2 -2 H359.3 a2 2 0 0 1 2 2 V768.4 Z" fill="#1cf28c"/>
<rect x="350.0" y="767.9" width="11.3" height="30.5" fill="#45c6fd"/>
<line x1="350.0" y1="767.9" x2="361.3" y2="767.9" stroke="#fff" stroke-width="0.6" stroke-opacity="0.6"/>
<text transform="translate(359.6 812.3) rotate(-45)" text-anchor="end" font-size="9" fill="#222">Nov 3</text>
<path d="M83.0 683.6 C83.0 683.6 96.6 688.5 105.7 688.5 C114.8 688.5 119.3 683.0 128.4 683.0 C137.5 683.0 142.0 684.1 151.1 688.0 C160.2 691.9 164.8 702.5 173.9 702.5 C182.9 702.5 187.5 702.5 196.6 699.9 C205.7 697.3 210.2 681.6 219.3 681.6 C228.4 681.6 232.9 696.7 242.0 696.7 C251.1 696.7 255.7 664.8 264.7 651.9 C273.8 639.0 278.4 632.2 287.5 632.2 C296.6 632.2 301.1 645.5 310.2 649.0 C319.3 652.5 323.8 649.6 332.9 652.5 C342.0 655.4 355.6 663.3 355.6 663.3" fill="none" stroke="#d19a33" stroke-width="1.5"/>
<circle cx="83.0" cy="683.6" r="3.2" fill="#d19a33"/>
<circle cx="105.7" cy="688.5" r="3.2" fill="#d19a33"/>
<circle cx="128.4" cy="683.0" r="3.2" fill="#d19a33"/>
<circle cx="151.1" cy="688.0" r="3.2" fill="#d19a33"/>
<circle cx="173.9" cy="702.5" r="3.2" fill="#d19a33"/>
<circle cx="196.6" cy="699.9" r="3.2" fill="#d19a33"/>
<circle cx="219.3" cy="681.6" r="3.2" fill="#d19a33"/>
<circle cx="242.0" cy="696.7" r="3.2" fill="#d19a33"/>
<circle cx="264.7" cy="651.9" r="3.2" fill="#d19a33"/>
<circle cx="287.5" cy="632.2" r="3.2" fill="#d19a33"/>
<circle cx="310.2" cy="649.0" r="3.2" fill="#d19a33"/>
<circle cx="332.9" cy="652.5" r="3.2" fill="#d19a33"/>
<circle cx="355.6" cy="663.3" r="3.2" fill="#d19a33"/>
<text x="62.1" y="627.2" text-anchor="end" font-size="8.6" fill="#222">1,000k</text>
<text x="62.1" y="671.1" text-anchor="end" font-size="8.6" fill="#222">750k</text>
<text x="62.1" y="714.7" text-anchor="end" font-size="8.6" fill="#222">500k</text>
<text x="62.1" y="758.3" text-anchor="end" font-size="8.6" fill="#222">250k</text>
<text x="62.1" y="801.6" text-anchor="end" font-size="8.6" fill="#222">0</text>
<text x="58.5" y="614" text-anchor="middle" font-size="10" fill="#333">$</text>
<text x="377.5" y="627.2" font-size="8.8" fill="#222">48</text>
<text x="377.5" y="671.1" font-size="8.8" fill="#222">36</text>
<text x="377.5" y="714.7" font-size="8.8" fill="#222">24</text>
<text x="377.5" y="758.3" font-size="8.8" fill="#222">12</text>
<text x="377.5" y="801.6" font-size="8.8" fill="#222">0</text>
<text x="363.5" y="614" font-size="9.5" fill="#333">%</text>
<rect x="286.2" y="598.7" width="73.8" height="44.2" rx="2" fill="#fff" fill-opacity="0.85" stroke="#d9d9d9" stroke-width="0.8"/>
<circle cx="296.5" cy="608" r="3.5" fill="#1cf28c"/><text x="304.5" y="611" font-size="8" fill="#333">Ad Sales</text>
<circle cx="296.5" cy="621" r="3.5" fill="#45c6fd"/><text x="304.5" y="624" font-size="8" fill="#333">Organic Sales</text>
<line x1="291" y1="634" x2="302" y2="634" stroke="#d19a33" stroke-width="1.5"/><circle cx="296.5" cy="634" r="2.5" fill="#d19a33"/><text x="304.5" y="637" font-size="8" fill="#333">ACoS</text>
<line x1="479.0" y1="623.5" x2="778.0" y2="623.5" stroke="#e6e6e6"/>
<line x1="479.0" y1="814.3" x2="778.0" y2="814.3" stroke="#e6e6e6"/>
<path d="M479.0 651.3 H611.8 A15.0 15.0 0 0 1 626.8 666.3 V696.8 A15.0 15.0 0 0 1 611.8 711.8 H479.0 Z" fill="#2db0fd"/>
<path d="M479.0 726.9 H736.2 A15.0 15.0 0 0 1 751.2 741.9 V773.0 A15.0 15.0 0 0 1 736.2 788.0 H479.0 Z" fill="#5550c6"/>
<text x="630.6" y="685.5" font-size="7.5" font-weight="bold" fill="#000" stroke="#fff" stroke-width="1.6" paint-order="stroke">$24,817.37</text>
<text x="748" y="761.3" text-anchor="end" font-size="7.5" font-weight="bold" fill="#000" stroke="#fff" stroke-width="1.6" paint-order="stroke">$45,830.63</text>
<text x="469.5" y="722.6" text-anchor="end" font-size="8.7" fill="#000">Broad</text>
<text x="479.0" y="832.8" text-anchor="middle" font-size="8.8" fill="#222">0</text>
<text x="538.8" y="832.8" text-anchor="middle" font-size="8.8" fill="#222">10k</text>
<text x="598.6" y="832.8" text-anchor="middle" font-size="8.8" fill="#222">20k</text>
<text x="658.4" y="832.8" text-anchor="middle" font-size="8.8" fill="#222">30k</text>
<text x="718.2" y="832.8" text-anchor="middle" font-size="8.8" fill="#222">40k</text>
<text x="778.0" y="832.8" text-anchor="middle" font-size="8.8" fill="#222">50k</text>
<rect x="723.5" y="598.4" width="47.3" height="31.5" rx="2" fill="#fff" stroke="#d9d9d9" stroke-width="0.8"/>
<circle cx="734" cy="608" r="3.5" fill="#2db0fd"/><text x="742" y="611" font-size="8.5" fill="#333">Spend</text>
<circle cx="734" cy="621" r="3.5" fill="#5550c6"/><text x="742" y="624" font-size="8.5" fill="#333">Sales</text>
<line x1="894.7" y1="624.2" x2="894.7" y2="815.1" stroke="#e6e6e6"/>
<line x1="992.6" y1="624.2" x2="992.6" y2="815.1" stroke="#e6e6e6"/>
<line x1="1091.5" y1="624.2" x2="1091.5" y2="815.1" stroke="#e6e6e6"/>
<line x1="1190.8" y1="624.2" x2="1190.8" y2="815.1" stroke="#e6e6e6"/>
<text x="885.2" y="627.4" text-anchor="end" font-size="8.8" fill="#222">2,000k</text>
<text x="885.2" y="675.0" text-anchor="end" font-size="8.8" fill="#222">1,500k</text>
<text x="885.2" y="722.9" text-anchor="end" font-size="8.8" fill="#222">1,000k</text>
<text x="885.2" y="770.1" text-anchor="end" font-size="8.8" fill="#222">500k</text>
<text x="885.2" y="818.3" text-anchor="end" font-size="8.8" fill="#222">0</text>
<path d="M1105.1 815.1 V772.1 A3.0 3.0 0 0 1 1108.1 769.1 H1133.6 A3.0 3.0 0 0 1 1136.6 772.1 V815.1 Z" fill="#10b981"/>
<path d="M1144.5 815.1 V678.5 A3.0 3.0 0 0 1 1147.5 675.5 H1173.0 A3.0 3.0 0 0 1 1176.0 678.5 V815.1 Z" fill="#3b82f6"/>
<rect x="909.8" y="814" width="29.2" height="1" fill="#10b981"/>
<text x="924.5" y="810.5" text-anchor="middle" font-size="7.5" font-weight="bold" fill="#000" stroke="#fff" stroke-width="1.6" paint-order="stroke">$6,945.55</text>
<text x="964.0" y="810.5" text-anchor="middle" font-size="7.5" font-weight="bold" fill="#000" stroke="#fff" stroke-width="1.6" paint-order="stroke">$281.11</text>
<text x="1022.8" y="810.5" text-anchor="middle" font-size="7.5" font-weight="bold" fill="#000" stroke="#fff" stroke-width="1.6" paint-order="stroke">$114.40</text>
<text x="1061.5" y="810.5" text-anchor="middle" font-size="7.5" font-weight="bold" fill="#000" stroke="#fff" stroke-width="1.6" paint-order="stroke">$54.58</text>
<text x="1120.8" y="764.8" text-anchor="middle" font-size="7.5" font-weight="bold" fill="#000" stroke="#fff" stroke-width="1.6" paint-order="stroke">$492,435.83</text>
<text x="1160.2" y="671.2" text-anchor="middle" font-size="7.5" font-weight="bold" fill="#000" stroke="#fff" stroke-width="1.6" paint-order="stroke">$1,487,505.80</text>
<text x="943.0" y="832.8" text-anchor="middle" font-size="8.85" fill="#222">Audience</text>
<text x="1042.0" y="832.8" text-anchor="middle" font-size="8.85" fill="#222">Contextual</text>
<text x="1141.0" y="832.8" text-anchor="middle" font-size="8.85" fill="#222">Manual</text>
<rect x="1135.7" y="598.4" width="47.2" height="31.6" rx="2" fill="#fff" stroke="#d9d9d9" stroke-width="0.8"/>
<circle cx="1146.5" cy="608" r="3.5" fill="#10b981"/><text x="1154.5" y="611" font-size="8.5" fill="#333">Spend</text>
<circle cx="1146.5" cy="621" r="3.5" fill="#3b82f6"/><text x="1154.5" y="624" font-size="8.5" fill="#333">Sales</text>
</svg>
<div class="a" style="left:124.7px;top:251.6px;width:290.6px;height:78px;background:rgba(15,15,15,0.85);border:1px solid #22b35a;border-radius:3px;box-shadow:0 1px 3px rgba(0,0,0,0.3)"></div>
<svg class="a" style="left:413px;top:285px" width="8" height="12" viewBox="0 0 8 12"><path d="M0 1 L5.5 6 L0 11 Z" fill="#1a1a1a"/><path d="M1.3 0.8 L6 6 L1.3 11.2" fill="none" stroke="#22b35a" stroke-width="1"/></svg>
<div class="a t" style="left:129.5px;top:257.62px;font-size:7.30px;color:#fff;font-weight:bold;-webkit-text-stroke:0.15px #fff;">Previous: Sep 8, 2024 - Sep 14, 2024</div>
<div class="a" style="left:130.0px;top:268.7px;width:125.3px;height:1.0px;background:#fff"></div>
<div class="a" style="left:131.2px;top:277.4px;width:3px;height:3px;border-radius:50%;background:#e8a54a"></div>
<div class="a t" style="left:135.5px;top:275.02px;font-size:7.30px;color:#fff;font-weight:bold;-webkit-text-stroke:0.15px #fff;">ACoS:</div>
<div class="a t" style="right:984.0px;top:275.02px;font-size:7.30px;color:#fff;font-weight:bold;-webkit-text-stroke:0.15px #fff;">51.7%</div>
<div class="a" style="left:130.0px;top:287.9px;width:125.3px;height:1.0px;background:#fff"></div>
<div class="a" style="left:131.2px;top:296.3px;width:3px;height:3px;border-radius:50%;background:#5cc28c"></div>
<div class="a t" style="left:135.5px;top:293.92px;font-size:7.30px;color:#fff;font-weight:bold;-webkit-text-stroke:0.15px #fff;">Bid Changes:</div>
<div class="a t" style="right:984.0px;top:293.92px;font-size:7.30px;color:#fff;font-weight:bold;-webkit-text-stroke:0.15px #fff;">622</div>
<div class="a" style="left:131.2px;top:307.0px;width:3px;height:3px;border-radius:50%;background:#55bfd6"></div>
<div class="a t" style="left:135.5px;top:304.62px;font-size:7.30px;color:#fff;font-weight:bold;-webkit-text-stroke:0.15px #fff;">Total Sales:</div>
<div class="a t" style="right:984.0px;top:304.62px;font-size:7.30px;color:#fff;font-weight:bold;-webkit-text-stroke:0.15px #fff;">$315,760.47</div>
<div class="a" style="left:131.2px;top:317.3px;width:3px;height:3px;border-radius:50%;background:#e06b6b"></div>
<div class="a t" style="left:135.5px;top:314.92px;font-size:7.30px;color:#fff;font-weight:bold;-webkit-text-stroke:0.15px #fff;">Spend:</div>
<div class="a t" style="right:984.0px;top:314.92px;font-size:7.30px;color:#fff;font-weight:bold;-webkit-text-stroke:0.15px #fff;">$54,237.29</div>
<div class="a" style="left:265.7px;top:257.0px;width:0.8px;height:67.0px;background:#777"></div>
<div class="a t" style="left:276.4px;top:257.62px;font-size:7.30px;color:#fff;font-weight:bold;-webkit-text-stroke:0.15px #fff;">Current: Sep 8, 2025 - Sep 14, 2025</div>
<div class="a" style="left:277.0px;top:268.7px;width:131.5px;height:1.0px;background:#fff"></div>
<div class="a" style="left:278px;top:277.4px;width:3px;height:3px;border-radius:50%;background:#d59b2d"></div>
<div class="a t" style="left:282.8px;top:275.02px;font-size:7.30px;color:#fff;font-weight:bold;-webkit-text-stroke:0.15px #fff;">ACoS:</div>
<div class="a t" style="right:831.2px;top:275.02px;font-size:7.30px;color:#fff;font-weight:bold;-webkit-text-stroke:0.15px #fff;">28.4% (-25.3)</div>
<div class="a" style="left:277.0px;top:287.9px;width:131.5px;height:1.0px;background:#fff"></div>
<div class="a" style="left:278px;top:296.3px;width:3px;height:3px;border-radius:50%;background:#03a550"></div>
<div class="a t" style="left:282.8px;top:293.92px;font-size:7.30px;color:#fff;font-weight:bold;-webkit-text-stroke:0.15px #fff;">Bid Changes:</div>
<div class="a t" style="right:831.2px;top:293.92px;font-size:7.30px;color:#fff;font-weight:bold;-webkit-text-stroke:0.15px #fff;">9,589 (+1438.4%)</div>
<div class="a" style="left:278px;top:307.0px;width:3px;height:3px;border-radius:50%;background:#03a4b4"></div>
<div class="a t" style="left:282.8px;top:304.62px;font-size:7.30px;color:#fff;font-weight:bold;-webkit-text-stroke:0.15px #fff;">Total Sales:</div>
<div class="a t" style="right:831.2px;top:304.62px;font-size:7.30px;color:#fff;font-weight:bold;-webkit-text-stroke:0.15px #fff;">$447,137.28 (+41.6%)</div>
<div class="a" style="left:278px;top:317.3px;width:3px;height:3px;border-radius:50%;background:#d33f3f"></div>
<div class="a t" style="left:282.8px;top:314.92px;font-size:7.30px;color:#fff;font-weight:bold;-webkit-text-stroke:0.15px #fff;">Spend:</div>
<div class="a t" style="right:831.2px;top:314.92px;font-size:7.30px;color:#fff;font-weight:bold;-webkit-text-stroke:0.15px #fff;">$28,681.82 (-47.1%)</div>
<div class="a" style="left:1203.5px;top:792px;width:37px;height:37px;border-radius:50%;background:linear-gradient(135deg,#3b82f6,#2563eb);box-shadow:0 2px 6px rgba(37,99,235,0.35)"></div>
<svg class="a" style="left:1212px;top:799px" width="20" height="20" viewBox="0 0 20 20"><path d="M8.3 3.5 L9.4 7.4 L12.6 8.5 L9.4 9.6 L8.3 13.5 L7.2 9.6 L4 8.5 L7.2 7.4 Z" fill="#fff"/><path d="M14 10.3 L15.2 11.5" stroke="#fff" stroke-width="1.2" stroke-linecap="round"/><path d="M14 17.3 L15.4 17.3" stroke="#fff" stroke-width="1.2" stroke-linecap="round"/></svg>
</body></html>
